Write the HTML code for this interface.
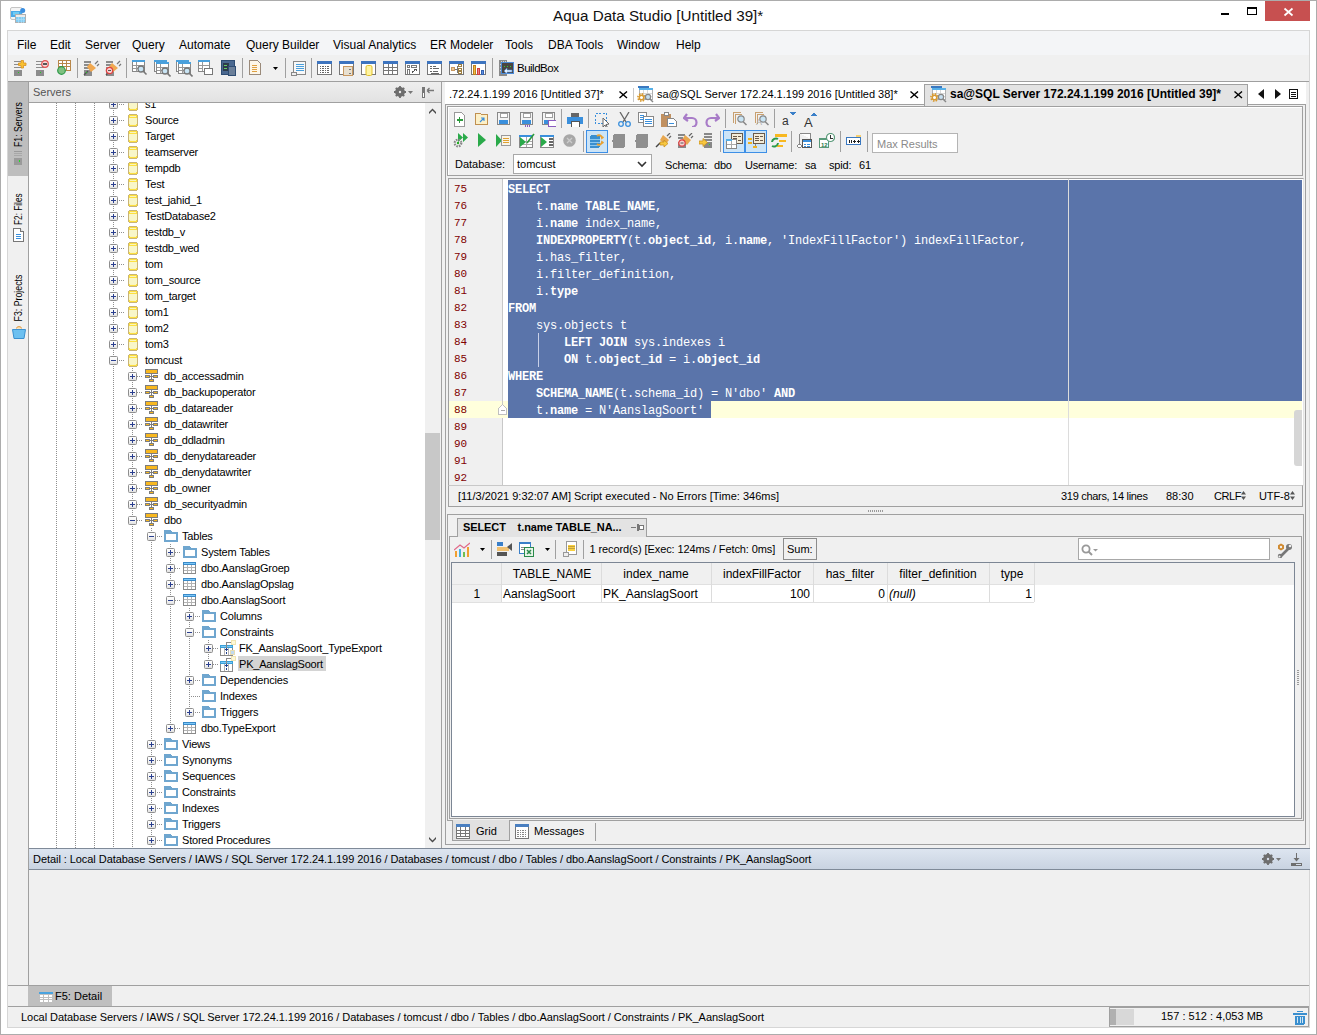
<!DOCTYPE html>
<html><head><meta charset="utf-8">
<style>
*{box-sizing:border-box;margin:0;padding:0}
html,body{width:1317px;height:1035px;overflow:hidden;background:#fff}
body{position:relative;font-family:"Liberation Sans",sans-serif;font-size:11px;color:#000}
.a{position:absolute}
.t{position:absolute;white-space:nowrap;line-height:1}
svg{shape-rendering:crispEdges}
svg .s{shape-rendering:auto}
</style></head><body>
<div class="a" style="left:0px;top:0px;width:1317px;height:1035px;border:1px solid #acacac"></div>
<svg class="a" style="left:10px;top:7px;" width="17" height="17" viewBox="0 0 17 17"><rect class="s" x=".5" y=".5" width="11.5" height="12" rx="1.5" fill="#f4f4f4" stroke="#c4c4c4"/><rect x="1" y="4" width="11" height="6" fill="#4aaae8"/><rect x="3" y="5" width="6" height="3" fill="#70ccf4"/><circle class="s" cx="12.7" cy="3.6" r="2.5" fill="#3a8ee0"/><rect x="5.5" y="7.5" width="10" height="8" fill="#84ccf2" stroke="#b0b0b0"/><rect x="6" y="8" width="9" height="1.5" fill="#ececec"/><path d="M6 12h9M8.5 9.5v6M11 9.5v6M13.5 9.5v6" stroke="#a8dcf8" stroke-width=".8"/></svg>
<div class="t" style="left:553px;top:7.63px;font-size:15.2px;color:#111">Aqua Data Studio [Untitled 39]*</div>
<div class="a" style="left:1221px;top:13px;width:8px;height:2px;background:#000"></div>
<div class="a" style="left:1247px;top:7px;width:10px;height:8px;border:1px solid #000;border-top-width:2px"></div>
<div class="a" style="left:1265px;top:1px;width:45px;height:20px;background:#c75050"></div>
<svg class="a" style="left:1283px;top:7px;" width="11" height="10" viewBox="0 0 11 10"><path class="s" d="M1.5 1.5L9.5 8.5M9.5 1.5L1.5 8.5" stroke="#fff" stroke-width="1.7"/></svg>
<div class="a" style="left:7px;top:30px;width:1303px;height:998px;border:1px solid #d6d6d6;background:#f0f0f0"></div>
<div class="a" style="left:8px;top:31px;width:1301px;height:24px;background:#f4f5f7"></div>
<div class="a" style="left:8px;top:55px;width:1301px;height:26px;background:#f0f0f0"></div>
<div class="a" style="left:8px;top:81px;width:1301px;height:1px;background:#9f9f9f"></div>
<div class="t" style="left:17px;top:39.14px;font-size:12px;">File</div>
<div class="t" style="left:50px;top:39.14px;font-size:12px;">Edit</div>
<div class="t" style="left:85px;top:39.14px;font-size:12px;">Server</div>
<div class="t" style="left:132px;top:39.14px;font-size:12px;">Query</div>
<div class="t" style="left:179px;top:39.14px;font-size:12px;">Automate</div>
<div class="t" style="left:246px;top:39.14px;font-size:12px;">Query Builder</div>
<div class="t" style="left:333px;top:39.14px;font-size:12px;">Visual Analytics</div>
<div class="t" style="left:430px;top:39.14px;font-size:12px;">ER Modeler</div>
<div class="t" style="left:505px;top:39.14px;font-size:12px;">Tools</div>
<div class="t" style="left:548px;top:39.14px;font-size:12px;">DBA Tools</div>
<div class="t" style="left:617px;top:39.14px;font-size:12px;">Window</div>
<div class="t" style="left:676px;top:39.14px;font-size:12px;">Help</div>
<svg class="a" style="left:13px;top:60px;" width="15" height="16" viewBox="0 0 15 16"><path d="M1 1.5h8M1 4.5h8M1 7.5h8" stroke="#8c8c8c" stroke-width="1.6"/>
<rect x="1" y="10" width="8" height="6" fill="#8c8c8c"/><rect x="5" y="12" width="1" height="1" fill="#2c2"/><path class="s" d="M8 0.5h2.5v2.5H13v2.5h-2.5V8H8V5.5H5.5V3H8z" fill="#f8c030" stroke="#d89020" stroke-width=".8"/></svg>
<svg class="a" style="left:35px;top:60px;" width="15" height="16" viewBox="0 0 15 16"><path d="M1 1.5h8M1 4.5h8M1 7.5h8" stroke="#8c8c8c" stroke-width="1.6"/>
<rect x="1" y="10" width="8" height="6" fill="#8c8c8c"/><rect x="5" y="12" width="1" height="1" fill="#2c2"/><circle class="s" cx="10" cy="4" r="3.3" fill="#f8d8d8" stroke="#e05050" stroke-width="1.2"/><path d="M8 4h4" stroke="#555" stroke-width="1.2"/></svg>
<svg class="a" style="left:57px;top:60px;" width="15" height="16" viewBox="0 0 15 16"><rect x="1.5" y=".5" width="12" height="10" fill="#fff" stroke="#b8874a"/>
<path d="M2 3.5h11M2 6.5h11M5.5 1v9M9.5 1v9" stroke="#b8874a"/>
<circle class="s" cx="4.5" cy="10.5" r="3.8" fill="#80c080" stroke="#2e9a4a" stroke-width="1.2"/></svg>
<div class="a" style="left:77px;top:58px;width:1px;height:20px;background:#a0a0a0"></div>
<svg class="a" style="left:83px;top:60px;" width="17" height="17" viewBox="0 0 17 17"><path d="M1 2h7M1 5h6M1 8h5" stroke="#8c8c8c" stroke-width="1.6"/><rect x="1" y="10" width="8" height="6" fill="#8c8c8c"/><g class="s"><path d="M7 3l6 5-5 4-4-5z" fill="#f0a850"/><path d="M12 4l3-3M14 6l2-2" stroke="#777" stroke-width="1.2"/><path d="M5 11l-4 4" stroke="#555" stroke-width="1.5"/></g><rect x="3" y="12" width="1" height="1" fill="#2c2"/></svg>
<svg class="a" style="left:105px;top:60px;" width="17" height="17" viewBox="0 0 17 17"><path d="M1 2h7M1 5h6M1 8h5" stroke="#8c8c8c" stroke-width="1.6"/><rect x="1" y="10" width="8" height="6" fill="#8c8c8c"/><g class="s"><path d="M7 3l6 5-5 4-4-5z" fill="#f0a850"/><path d="M12 4l3-3M14 6l2-2" stroke="#777" stroke-width="1.2"/><path d="M5 11l-4 4" stroke="#555" stroke-width="1.5"/></g><circle class="s" cx="4.5" cy="10.5" r="3.2" fill="#f6d0d0" stroke="#e04040" stroke-width="1.2"/><path d="M3 10.5h3" stroke="#555"/></svg>
<div class="a" style="left:126px;top:58px;width:1px;height:20px;background:#a0a0a0"></div>
<svg class="a" style="left:132px;top:60px;" width="17" height="17" viewBox="0 0 17 17"><rect x="0.5" y="0.5" width="12" height="11" fill="#fff" stroke="#888"/><rect x="0" y="0" width="13" height="2" fill="#4aa0dc"/><path d="M1 5.5h11M1 8.5h11M4.5 2v9" stroke="#999"/><g class="s"><circle cx="9" cy="9" r="3" fill="#c8e4f4" stroke="#777" stroke-width="1.3"/><path d="M11 11l3.5 3.5" stroke="#777" stroke-width="1.6"/></g></svg>
<svg class="a" style="left:154px;top:60px;" width="17" height="17" viewBox="0 0 17 17"><rect x=".5" y=".5" width="12" height="11" fill="#fff" stroke="#888"/><rect x="0" y="0" width="13" height="2" fill="#4aa0dc"/><rect x="2.5" y="2.5" width="12" height="11" fill="#fff" stroke="#888"/><rect x="2" y="2" width="13" height="2" fill="#4aa0dc"/><path d="M3 7.5h11M3 10.5h11M6.5 4v9" stroke="#999"/><g class="s"><circle cx="11" cy="11" r="3" fill="#c8e4f4" stroke="#777" stroke-width="1.3"/><path d="M13 13l3.5 3.5" stroke="#777" stroke-width="1.6"/></g></svg>
<svg class="a" style="left:176px;top:60px;" width="17" height="17" viewBox="0 0 17 17"><rect x=".5" y=".5" width="12" height="11" fill="#fff" stroke="#888"/><rect x="0" y="0" width="13" height="2" fill="#4aa0dc"/><rect x="2.5" y="2.5" width="12" height="11" fill="#fff" stroke="#888"/><rect x="2" y="2" width="13" height="2" fill="#4aa0dc"/><path d="M3 7.5h11M3 10.5h11M6.5 4v9" stroke="#999"/><g class="s"><circle cx="11" cy="11" r="3" fill="#c8e4f4" stroke="#777" stroke-width="1.3"/><path d="M13 13l3.5 3.5" stroke="#777" stroke-width="1.6"/></g></svg>
<svg class="a" style="left:198px;top:60px;" width="16" height="16" viewBox="0 0 16 16"><rect x=".5" y=".5" width="11" height="11" fill="#fff" stroke="#888"/><rect x="0" y="0" width="12" height="2" fill="#4aa0dc"/><path d="M1 5.5h10M1 8.5h4M4.5 2v9" stroke="#999"/><rect x="6.5" y="8.5" width="8" height="6" fill="#fff" stroke="#777"/></svg>
<svg class="a" style="left:221px;top:60px;" width="15" height="16" viewBox="0 0 15 16"><rect x=".5" y=".5" width="13" height="14" fill="#4a6890" stroke="#2f4d73"/><rect x="2" y="3" width="6" height="8" fill="#2d3b4c"/><path d="M3 5h3M3 8h3" stroke="#6c6" /><rect x="7" y="6" width="7" height="9" fill="#6b7f99" stroke="#2f4d73"/></svg>
<div class="a" style="left:242px;top:58px;width:1px;height:20px;background:#a0a0a0"></div>
<svg class="a" style="left:249px;top:60px;" width="12" height="16" viewBox="0 0 12 16"><path d="M.5 .5h8l3 3v11h-11z" fill="#fdf6e8" stroke="#9a8a7a"/><path d="M3 5h5M3 7h5M3 9h5M3 11h5" stroke="#e0a040" stroke-width="1"/></svg>
<svg class="a" style="left:273px;top:67px;" width="5" height="3" viewBox="0 0 5 3"><path class="s" d="M0 0H5L2.5 3z" fill="#000"/></svg>
<div class="a" style="left:285px;top:58px;width:1px;height:20px;background:#a0a0a0"></div>
<svg class="a" style="left:290px;top:60px;" width="17" height="17" viewBox="0 0 17 17"><path d="M3.5 1.5h12v13h-12z" fill="#f8f8f8" stroke="#888"/><path d="M1.5 12.5h5v3h-5z" fill="#eee" stroke="#888"/><path d="M6 4h8M6 6h8M6 8h8M6 10h8" stroke="#4a9fdc"/></svg>
<div class="a" style="left:311px;top:58px;width:1px;height:20px;background:#a0a0a0"></div>
<svg class="a" style="left:317px;top:61px;" width="16" height="15" viewBox="0 0 16 15"><rect x=".5" y=".5" width="14" height="13" fill="#fff" stroke="#777"/><rect x="0" y="0" width="15" height="2.5" fill="#3d74bf"/><path d="M2.5 5.5h10M2.5 7.5h10M2.5 9.5h10M2.5 11.5h10" stroke="#666" stroke-dasharray="1.5 1"/></svg>
<svg class="a" style="left:339px;top:61px;" width="16" height="15" viewBox="0 0 16 15"><rect x=".5" y=".5" width="14" height="13" fill="#fff" stroke="#777"/><rect x="0" y="0" width="15" height="2.5" fill="#3d74bf"/><rect x="4.5" y="5.5" width="9" height="9" fill="#e8e0d0" stroke="#c89860"/><path d="M10 8h2M10 12h2" stroke="#777"/></svg>
<svg class="a" style="left:361px;top:61px;" width="16" height="15" viewBox="0 0 16 15"><rect x=".5" y=".5" width="14" height="13" fill="#fff" stroke="#777"/><rect x="0" y="0" width="15" height="2.5" fill="#3d74bf"/><rect class="s" x="5" y="4.5" width="6" height="10" rx="1.5" fill="#fff4a0" stroke="#e0c030"/></svg>
<svg class="a" style="left:383px;top:61px;" width="16" height="15" viewBox="0 0 16 15"><rect x=".5" y=".5" width="14" height="13" fill="#fff" stroke="#777"/><rect x="0" y="0" width="15" height="2.5" fill="#3d74bf"/><path d="M1 6.5h13M1 9.5h13M5.5 3v10M9.5 3v10" stroke="#777"/></svg>
<svg class="a" style="left:405px;top:61px;" width="16" height="15" viewBox="0 0 16 15"><rect x=".5" y=".5" width="14" height="13" fill="#fff" stroke="#777"/><rect x="0" y="0" width="15" height="2.5" fill="#3d74bf"/><rect x="2.5" y="4.5" width="2" height="2" fill="none" stroke="#777"/><rect x="6.5" y="4.5" width="5" height="2" fill="none" stroke="#777"/><rect x="2.5" y="8.5" width="2" height="5" fill="none" stroke="#777"/><path d="M7 12l4-4M9 8h2v2M7 12v-2" stroke="#555"/></svg>
<svg class="a" style="left:427px;top:61px;" width="16" height="15" viewBox="0 0 16 15"><rect x=".5" y=".5" width="14" height="13" fill="#fff" stroke="#777"/><rect x="0" y="0" width="15" height="2.5" fill="#3d74bf"/><path d="M2.5 5h2M6 5h3M2.5 7.5h2M6 7.5h6M2.5 10h2M6 10h5M4 12h8" stroke="#666"/></svg>
<svg class="a" style="left:449px;top:61px;" width="16" height="15" viewBox="0 0 16 15"><rect x=".5" y=".5" width="14" height="13" fill="#fff" stroke="#777"/><rect x="0" y="0" width="15" height="2.5" fill="#3d74bf"/><rect x="2.5" y="6.5" width="3" height="3" fill="#f0c890" stroke="#c89860"/><rect x="9.5" y="3.5" width="3" height="2" fill="#fff" stroke="#a08040"/><rect x="9.5" y="7" width="3" height="2" fill="#fff" stroke="#a08040"/><rect x="9.5" y="10.5" width="3" height="2" fill="#fff" stroke="#a08040"/><path d="M6 8h2M8 4.5v7" stroke="#777"/></svg>
<svg class="a" style="left:471px;top:61px;" width="16" height="15" viewBox="0 0 16 15"><rect x=".5" y=".5" width="14" height="13" fill="#fff" stroke="#777"/><rect x="0" y="0" width="15" height="2.5" fill="#3d74bf"/><rect x="2.5" y="4.5" width="2" height="9" fill="#f0c040" stroke="#c08020"/><rect x="6.5" y="7.5" width="2" height="6" fill="#f08080" stroke="#d04040"/><rect x="10.5" y="9.5" width="2" height="4" fill="#6090e0" stroke="#3060b0"/></svg>
<div class="a" style="left:492px;top:58px;width:1px;height:20px;background:#a0a0a0"></div>
<svg class="a" style="left:499px;top:60px;" width="15" height="16" viewBox="0 0 15 16"><rect x="0" y="0" width="8" height="16" fill="#8a8a8a"/><path d="M2 1.5h1M4 1.5h1M6 1.5h1M1 4h1M1 7h1M1 10h1" stroke="#d0d0d0"/><rect x="2.5" y="2.5" width="12" height="11" fill="#4a4440" stroke="#4a8ad8"/><path d="M5 6h1M8 6h1M11 6h1" stroke="#3c3"/><path class="s" d="M5 11l3-3v2h5v2H8v2z" fill="#e8f4ff" stroke="#4a8ad8" stroke-width=".6"/></svg>
<div class="t" style="left:517px;top:62.57px;font-size:11.5px;letter-spacing:-0.5px">BuildBox</div>
<svg width="0" height="0" style="position:absolute"><defs><linearGradient id="eg" x1="0" y1="0" x2="0" y2="1"><stop offset="0" stop-color="#ffffff"/><stop offset=".55" stop-color="#f4f4f4"/><stop offset="1" stop-color="#dcdcdc"/></linearGradient></defs></svg>
<div class="a" style="left:8px;top:82px;width:20px;height:904px;background:#f0f0f0"></div>
<div class="a" style="left:28px;top:82px;width:1px;height:904px;background:#a0a0a0"></div>
<div class="a" style="left:8px;top:82px;width:20px;height:94px;background:#bebebe"></div>
<div class="t" style="left:0;top:0;font-size:11px;transform-origin:0 0;transform:translate(12.8px,147px) rotate(-90deg) scaleX(0.79)">F1: Servers</div>
<svg class="a" style="left:14px;top:151px;" width="8" height="14" viewBox="0 0 8 14"><rect x="0" y="0" width="8" height="1" fill="#9a9a9a"/><rect x="0" y="2" width="8" height="1" fill="#a8a8a8"/><rect x="0" y="4" width="8" height="1" fill="#a8a8a8"/><rect x="0" y="7" width="8" height="7" fill="#9a9a9a"/><rect x="5" y="9" width="1" height="2" fill="#2d2"/></svg>
<div class="t" style="left:0;top:0;font-size:11px;transform-origin:0 0;transform:translate(12.8px,225px) rotate(-90deg) scaleX(0.75)">F2: Files</div>
<svg class="a" style="left:13px;top:228px;" width="11" height="14" viewBox="0 0 11 14"><path d="M.5 .5h7l3 3v10h-10z" fill="#fff" stroke="#777"/><path d="M7.5 .5v3h3" fill="#ddd" stroke="#777"/><path d="M3 6.5h5M3 8.5h5M3 10.5h5" stroke="#3a8fdc"/></svg>
<div class="t" style="left:0;top:0;font-size:11px;transform-origin:0 0;transform:translate(12.8px,321.5px) rotate(-90deg) scaleX(0.8)">F3: Projects</div>
<svg class="a" style="left:12px;top:326px;" width="14" height="13" viewBox="0 0 14 13"><path class="s" d="M4.5 2.5a2.5 2 0 0 1 5 0" fill="#f8d8a0" stroke="#e0a050"/><path class="s" d="M.5 3.5h13l-1.5 9h-10z" fill="#6cc0f0" stroke="#3a90d0"/></svg>
<div class="a" style="left:29px;top:82px;width:412px;height:20px;background:linear-gradient(#eeeeee,#e2e2e2)"></div>
<div class="a" style="left:29px;top:102px;width:412px;height:1px;background:#a0a0a0"></div>
<div class="a" style="left:441px;top:82px;width:1px;height:766px;background:#a0a0a0"></div>
<div class="t" style="left:33px;top:87.39px;font-size:11px;color:#555">Servers</div>
<svg class="a" style="left:394px;top:86px;" width="20" height="12" viewBox="0 0 20 12"><g class="s"><circle cx="6" cy="6" r="3.6" fill="none" stroke="#6e6e6e" stroke-width="2.6"/><path d="M6 0v12M0 6h12M1.8 1.8l8.4 8.4M10.2 1.8l-8.4 8.4" stroke="#6e6e6e" stroke-width="1.8"/><circle cx="6" cy="6" r="1.2" fill="#eaeaea"/></g><path class="s" d="M14 5h5l-2.5 3z" fill="#777"/></svg>
<svg class="a" style="left:421px;top:86px;" width="14" height="13" viewBox="0 0 14 13"><rect x="1.5" y="1.5" width="2" height="10" fill="#fff" stroke="#777"/><rect x="1" y="1" width="3" height="6" fill="#777"/><path class="s" d="M6 4.5h7M6 4.5l2.5-2.5M6 4.5l2.5 2.5" stroke="#777" stroke-width="1.3" fill="none"/></svg>
<div class="a" style="left:29px;top:103px;width:396px;height:745px;background:#fff"></div>
<div class="a" style="left:425px;top:103px;width:16px;height:745px;background:#f0f0f0"></div>
<div class="a" style="left:425px;top:433px;width:15px;height:107px;background:#c8c8c8"></div>
<svg class="a" style="left:429px;top:108px;" width="7" height="6" viewBox="0 0 7 6"><path class="s" d="M0 6V4L3.5 .5 7 4v2L3.5 2.5z" fill="#4a4a4a"/></svg>
<svg class="a" style="left:429px;top:837px;" width="7" height="6" viewBox="0 0 7 6"><path class="s" d="M0 0v2l3.5 3.5L7 2V0L3.5 3.5z" fill="#4a4a4a"/></svg>
<div class="a" style="left:0;top:103px;width:425px;height:745px;overflow:hidden"><div class="a" style="left:0;top:-103px;width:425px;height:1035px">
<div class="a" style="left:56px;top:103px;width:1px;height:745px;background:repeating-linear-gradient(#8f8f8f 0 1px,transparent 1px 2px)"></div>
<div class="a" style="left:75px;top:103px;width:1px;height:745px;background:repeating-linear-gradient(#8f8f8f 0 1px,transparent 1px 2px)"></div>
<div class="a" style="left:94px;top:103px;width:1px;height:745px;background:repeating-linear-gradient(#8f8f8f 0 1px,transparent 1px 2px)"></div>
<div class="a" style="left:113px;top:96px;width:1px;height:9px;background:repeating-linear-gradient(#8f8f8f 0 1px,transparent 1px 2px)"></div>
<div class="a" style="left:113px;top:104px;width:1px;height:8px;background:repeating-linear-gradient(#8f8f8f 0 1px,transparent 1px 2px)"></div>
<div class="a" style="left:119px;top:104px;width:5px;height:1px;background:repeating-linear-gradient(90deg,#8f8f8f 0 1px,transparent 1px 2px)"></div>
<svg class="a" style="left:109px;top:100px;" width="9" height="9" viewBox="0 0 9 9"><rect class="s" x=".5" y=".5" width="8" height="8" rx="1" fill="url(#eg)" stroke="#8e8e8e"/><path d="M2 4.5h5" stroke="#2a3f8f"/><path d="M4.5 2v5" stroke="#2a3f8f"/></svg>
<svg class="a" style="left:128px;top:98px;" width="10" height="13" viewBox="0 0 10 13"><rect x="1" y="0" width="8" height="13" fill="#c8b478"/><rect x="0" y="1" width="10" height="11" fill="#c8b478"/><rect x="1" y="1" width="8" height="3" fill="#fde040"/><rect x="2" y="2" width="6" height="1" fill="#f8f4c0"/><rect x="1" y="4" width="8" height="6" fill="#f8f6c8"/><rect x="1" y="10" width="8" height="2" fill="#fde040"/><rect x="2" y="10" width="6" height="1" fill="#f8f4c0"/></svg>
<div class="t" style="left:145px;top:99.19px;font-size:11px;letter-spacing:-0.2px">s1</div>
<div class="a" style="left:113px;top:112px;width:1px;height:9px;background:repeating-linear-gradient(#8f8f8f 0 1px,transparent 1px 2px)"></div>
<div class="a" style="left:113px;top:120px;width:1px;height:8px;background:repeating-linear-gradient(#8f8f8f 0 1px,transparent 1px 2px)"></div>
<div class="a" style="left:119px;top:120px;width:5px;height:1px;background:repeating-linear-gradient(90deg,#8f8f8f 0 1px,transparent 1px 2px)"></div>
<svg class="a" style="left:109px;top:116px;" width="9" height="9" viewBox="0 0 9 9"><rect class="s" x=".5" y=".5" width="8" height="8" rx="1" fill="url(#eg)" stroke="#8e8e8e"/><path d="M2 4.5h5" stroke="#2a3f8f"/><path d="M4.5 2v5" stroke="#2a3f8f"/></svg>
<svg class="a" style="left:128px;top:114px;" width="10" height="13" viewBox="0 0 10 13"><rect x="1" y="0" width="8" height="13" fill="#c8b478"/><rect x="0" y="1" width="10" height="11" fill="#c8b478"/><rect x="1" y="1" width="8" height="3" fill="#fde040"/><rect x="2" y="2" width="6" height="1" fill="#f8f4c0"/><rect x="1" y="4" width="8" height="6" fill="#f8f6c8"/><rect x="1" y="10" width="8" height="2" fill="#fde040"/><rect x="2" y="10" width="6" height="1" fill="#f8f4c0"/></svg>
<div class="t" style="left:145px;top:115.19px;font-size:11px;letter-spacing:-0.2px">Source</div>
<div class="a" style="left:113px;top:128px;width:1px;height:9px;background:repeating-linear-gradient(#8f8f8f 0 1px,transparent 1px 2px)"></div>
<div class="a" style="left:113px;top:136px;width:1px;height:8px;background:repeating-linear-gradient(#8f8f8f 0 1px,transparent 1px 2px)"></div>
<div class="a" style="left:119px;top:136px;width:5px;height:1px;background:repeating-linear-gradient(90deg,#8f8f8f 0 1px,transparent 1px 2px)"></div>
<svg class="a" style="left:109px;top:132px;" width="9" height="9" viewBox="0 0 9 9"><rect class="s" x=".5" y=".5" width="8" height="8" rx="1" fill="url(#eg)" stroke="#8e8e8e"/><path d="M2 4.5h5" stroke="#2a3f8f"/><path d="M4.5 2v5" stroke="#2a3f8f"/></svg>
<svg class="a" style="left:128px;top:130px;" width="10" height="13" viewBox="0 0 10 13"><rect x="1" y="0" width="8" height="13" fill="#c8b478"/><rect x="0" y="1" width="10" height="11" fill="#c8b478"/><rect x="1" y="1" width="8" height="3" fill="#fde040"/><rect x="2" y="2" width="6" height="1" fill="#f8f4c0"/><rect x="1" y="4" width="8" height="6" fill="#f8f6c8"/><rect x="1" y="10" width="8" height="2" fill="#fde040"/><rect x="2" y="10" width="6" height="1" fill="#f8f4c0"/></svg>
<div class="t" style="left:145px;top:131.19px;font-size:11px;letter-spacing:-0.2px">Target</div>
<div class="a" style="left:113px;top:144px;width:1px;height:9px;background:repeating-linear-gradient(#8f8f8f 0 1px,transparent 1px 2px)"></div>
<div class="a" style="left:113px;top:152px;width:1px;height:8px;background:repeating-linear-gradient(#8f8f8f 0 1px,transparent 1px 2px)"></div>
<div class="a" style="left:119px;top:152px;width:5px;height:1px;background:repeating-linear-gradient(90deg,#8f8f8f 0 1px,transparent 1px 2px)"></div>
<svg class="a" style="left:109px;top:148px;" width="9" height="9" viewBox="0 0 9 9"><rect class="s" x=".5" y=".5" width="8" height="8" rx="1" fill="url(#eg)" stroke="#8e8e8e"/><path d="M2 4.5h5" stroke="#2a3f8f"/><path d="M4.5 2v5" stroke="#2a3f8f"/></svg>
<svg class="a" style="left:128px;top:146px;" width="10" height="13" viewBox="0 0 10 13"><rect x="1" y="0" width="8" height="13" fill="#c8b478"/><rect x="0" y="1" width="10" height="11" fill="#c8b478"/><rect x="1" y="1" width="8" height="3" fill="#fde040"/><rect x="2" y="2" width="6" height="1" fill="#f8f4c0"/><rect x="1" y="4" width="8" height="6" fill="#f8f6c8"/><rect x="1" y="10" width="8" height="2" fill="#fde040"/><rect x="2" y="10" width="6" height="1" fill="#f8f4c0"/></svg>
<div class="t" style="left:145px;top:147.19px;font-size:11px;letter-spacing:-0.2px">teamserver</div>
<div class="a" style="left:113px;top:160px;width:1px;height:9px;background:repeating-linear-gradient(#8f8f8f 0 1px,transparent 1px 2px)"></div>
<div class="a" style="left:113px;top:168px;width:1px;height:8px;background:repeating-linear-gradient(#8f8f8f 0 1px,transparent 1px 2px)"></div>
<div class="a" style="left:119px;top:168px;width:5px;height:1px;background:repeating-linear-gradient(90deg,#8f8f8f 0 1px,transparent 1px 2px)"></div>
<svg class="a" style="left:109px;top:164px;" width="9" height="9" viewBox="0 0 9 9"><rect class="s" x=".5" y=".5" width="8" height="8" rx="1" fill="url(#eg)" stroke="#8e8e8e"/><path d="M2 4.5h5" stroke="#2a3f8f"/><path d="M4.5 2v5" stroke="#2a3f8f"/></svg>
<svg class="a" style="left:128px;top:162px;" width="10" height="13" viewBox="0 0 10 13"><rect x="1" y="0" width="8" height="13" fill="#c8b478"/><rect x="0" y="1" width="10" height="11" fill="#c8b478"/><rect x="1" y="1" width="8" height="3" fill="#fde040"/><rect x="2" y="2" width="6" height="1" fill="#f8f4c0"/><rect x="1" y="4" width="8" height="6" fill="#f8f6c8"/><rect x="1" y="10" width="8" height="2" fill="#fde040"/><rect x="2" y="10" width="6" height="1" fill="#f8f4c0"/></svg>
<div class="t" style="left:145px;top:163.19px;font-size:11px;letter-spacing:-0.2px">tempdb</div>
<div class="a" style="left:113px;top:176px;width:1px;height:9px;background:repeating-linear-gradient(#8f8f8f 0 1px,transparent 1px 2px)"></div>
<div class="a" style="left:113px;top:184px;width:1px;height:8px;background:repeating-linear-gradient(#8f8f8f 0 1px,transparent 1px 2px)"></div>
<div class="a" style="left:119px;top:184px;width:5px;height:1px;background:repeating-linear-gradient(90deg,#8f8f8f 0 1px,transparent 1px 2px)"></div>
<svg class="a" style="left:109px;top:180px;" width="9" height="9" viewBox="0 0 9 9"><rect class="s" x=".5" y=".5" width="8" height="8" rx="1" fill="url(#eg)" stroke="#8e8e8e"/><path d="M2 4.5h5" stroke="#2a3f8f"/><path d="M4.5 2v5" stroke="#2a3f8f"/></svg>
<svg class="a" style="left:128px;top:178px;" width="10" height="13" viewBox="0 0 10 13"><rect x="1" y="0" width="8" height="13" fill="#c8b478"/><rect x="0" y="1" width="10" height="11" fill="#c8b478"/><rect x="1" y="1" width="8" height="3" fill="#fde040"/><rect x="2" y="2" width="6" height="1" fill="#f8f4c0"/><rect x="1" y="4" width="8" height="6" fill="#f8f6c8"/><rect x="1" y="10" width="8" height="2" fill="#fde040"/><rect x="2" y="10" width="6" height="1" fill="#f8f4c0"/></svg>
<div class="t" style="left:145px;top:179.19px;font-size:11px;letter-spacing:-0.2px">Test</div>
<div class="a" style="left:113px;top:192px;width:1px;height:9px;background:repeating-linear-gradient(#8f8f8f 0 1px,transparent 1px 2px)"></div>
<div class="a" style="left:113px;top:200px;width:1px;height:8px;background:repeating-linear-gradient(#8f8f8f 0 1px,transparent 1px 2px)"></div>
<div class="a" style="left:119px;top:200px;width:5px;height:1px;background:repeating-linear-gradient(90deg,#8f8f8f 0 1px,transparent 1px 2px)"></div>
<svg class="a" style="left:109px;top:196px;" width="9" height="9" viewBox="0 0 9 9"><rect class="s" x=".5" y=".5" width="8" height="8" rx="1" fill="url(#eg)" stroke="#8e8e8e"/><path d="M2 4.5h5" stroke="#2a3f8f"/><path d="M4.5 2v5" stroke="#2a3f8f"/></svg>
<svg class="a" style="left:128px;top:194px;" width="10" height="13" viewBox="0 0 10 13"><rect x="1" y="0" width="8" height="13" fill="#c8b478"/><rect x="0" y="1" width="10" height="11" fill="#c8b478"/><rect x="1" y="1" width="8" height="3" fill="#fde040"/><rect x="2" y="2" width="6" height="1" fill="#f8f4c0"/><rect x="1" y="4" width="8" height="6" fill="#f8f6c8"/><rect x="1" y="10" width="8" height="2" fill="#fde040"/><rect x="2" y="10" width="6" height="1" fill="#f8f4c0"/></svg>
<div class="t" style="left:145px;top:195.19px;font-size:11px;letter-spacing:-0.2px">test_jahid_1</div>
<div class="a" style="left:113px;top:208px;width:1px;height:9px;background:repeating-linear-gradient(#8f8f8f 0 1px,transparent 1px 2px)"></div>
<div class="a" style="left:113px;top:216px;width:1px;height:8px;background:repeating-linear-gradient(#8f8f8f 0 1px,transparent 1px 2px)"></div>
<div class="a" style="left:119px;top:216px;width:5px;height:1px;background:repeating-linear-gradient(90deg,#8f8f8f 0 1px,transparent 1px 2px)"></div>
<svg class="a" style="left:109px;top:212px;" width="9" height="9" viewBox="0 0 9 9"><rect class="s" x=".5" y=".5" width="8" height="8" rx="1" fill="url(#eg)" stroke="#8e8e8e"/><path d="M2 4.5h5" stroke="#2a3f8f"/><path d="M4.5 2v5" stroke="#2a3f8f"/></svg>
<svg class="a" style="left:128px;top:210px;" width="10" height="13" viewBox="0 0 10 13"><rect x="1" y="0" width="8" height="13" fill="#c8b478"/><rect x="0" y="1" width="10" height="11" fill="#c8b478"/><rect x="1" y="1" width="8" height="3" fill="#fde040"/><rect x="2" y="2" width="6" height="1" fill="#f8f4c0"/><rect x="1" y="4" width="8" height="6" fill="#f8f6c8"/><rect x="1" y="10" width="8" height="2" fill="#fde040"/><rect x="2" y="10" width="6" height="1" fill="#f8f4c0"/></svg>
<div class="t" style="left:145px;top:211.19px;font-size:11px;letter-spacing:-0.2px">TestDatabase2</div>
<div class="a" style="left:113px;top:224px;width:1px;height:9px;background:repeating-linear-gradient(#8f8f8f 0 1px,transparent 1px 2px)"></div>
<div class="a" style="left:113px;top:232px;width:1px;height:8px;background:repeating-linear-gradient(#8f8f8f 0 1px,transparent 1px 2px)"></div>
<div class="a" style="left:119px;top:232px;width:5px;height:1px;background:repeating-linear-gradient(90deg,#8f8f8f 0 1px,transparent 1px 2px)"></div>
<svg class="a" style="left:109px;top:228px;" width="9" height="9" viewBox="0 0 9 9"><rect class="s" x=".5" y=".5" width="8" height="8" rx="1" fill="url(#eg)" stroke="#8e8e8e"/><path d="M2 4.5h5" stroke="#2a3f8f"/><path d="M4.5 2v5" stroke="#2a3f8f"/></svg>
<svg class="a" style="left:128px;top:226px;" width="10" height="13" viewBox="0 0 10 13"><rect x="1" y="0" width="8" height="13" fill="#c8b478"/><rect x="0" y="1" width="10" height="11" fill="#c8b478"/><rect x="1" y="1" width="8" height="3" fill="#fde040"/><rect x="2" y="2" width="6" height="1" fill="#f8f4c0"/><rect x="1" y="4" width="8" height="6" fill="#f8f6c8"/><rect x="1" y="10" width="8" height="2" fill="#fde040"/><rect x="2" y="10" width="6" height="1" fill="#f8f4c0"/></svg>
<div class="t" style="left:145px;top:227.19px;font-size:11px;letter-spacing:-0.2px">testdb_v</div>
<div class="a" style="left:113px;top:240px;width:1px;height:9px;background:repeating-linear-gradient(#8f8f8f 0 1px,transparent 1px 2px)"></div>
<div class="a" style="left:113px;top:248px;width:1px;height:8px;background:repeating-linear-gradient(#8f8f8f 0 1px,transparent 1px 2px)"></div>
<div class="a" style="left:119px;top:248px;width:5px;height:1px;background:repeating-linear-gradient(90deg,#8f8f8f 0 1px,transparent 1px 2px)"></div>
<svg class="a" style="left:109px;top:244px;" width="9" height="9" viewBox="0 0 9 9"><rect class="s" x=".5" y=".5" width="8" height="8" rx="1" fill="url(#eg)" stroke="#8e8e8e"/><path d="M2 4.5h5" stroke="#2a3f8f"/><path d="M4.5 2v5" stroke="#2a3f8f"/></svg>
<svg class="a" style="left:128px;top:242px;" width="10" height="13" viewBox="0 0 10 13"><rect x="1" y="0" width="8" height="13" fill="#c8b478"/><rect x="0" y="1" width="10" height="11" fill="#c8b478"/><rect x="1" y="1" width="8" height="3" fill="#fde040"/><rect x="2" y="2" width="6" height="1" fill="#f8f4c0"/><rect x="1" y="4" width="8" height="6" fill="#f8f6c8"/><rect x="1" y="10" width="8" height="2" fill="#fde040"/><rect x="2" y="10" width="6" height="1" fill="#f8f4c0"/></svg>
<div class="t" style="left:145px;top:243.19px;font-size:11px;letter-spacing:-0.2px">testdb_wed</div>
<div class="a" style="left:113px;top:256px;width:1px;height:9px;background:repeating-linear-gradient(#8f8f8f 0 1px,transparent 1px 2px)"></div>
<div class="a" style="left:113px;top:264px;width:1px;height:8px;background:repeating-linear-gradient(#8f8f8f 0 1px,transparent 1px 2px)"></div>
<div class="a" style="left:119px;top:264px;width:5px;height:1px;background:repeating-linear-gradient(90deg,#8f8f8f 0 1px,transparent 1px 2px)"></div>
<svg class="a" style="left:109px;top:260px;" width="9" height="9" viewBox="0 0 9 9"><rect class="s" x=".5" y=".5" width="8" height="8" rx="1" fill="url(#eg)" stroke="#8e8e8e"/><path d="M2 4.5h5" stroke="#2a3f8f"/><path d="M4.5 2v5" stroke="#2a3f8f"/></svg>
<svg class="a" style="left:128px;top:258px;" width="10" height="13" viewBox="0 0 10 13"><rect x="1" y="0" width="8" height="13" fill="#c8b478"/><rect x="0" y="1" width="10" height="11" fill="#c8b478"/><rect x="1" y="1" width="8" height="3" fill="#fde040"/><rect x="2" y="2" width="6" height="1" fill="#f8f4c0"/><rect x="1" y="4" width="8" height="6" fill="#f8f6c8"/><rect x="1" y="10" width="8" height="2" fill="#fde040"/><rect x="2" y="10" width="6" height="1" fill="#f8f4c0"/></svg>
<div class="t" style="left:145px;top:259.19px;font-size:11px;letter-spacing:-0.2px">tom</div>
<div class="a" style="left:113px;top:272px;width:1px;height:9px;background:repeating-linear-gradient(#8f8f8f 0 1px,transparent 1px 2px)"></div>
<div class="a" style="left:113px;top:280px;width:1px;height:8px;background:repeating-linear-gradient(#8f8f8f 0 1px,transparent 1px 2px)"></div>
<div class="a" style="left:119px;top:280px;width:5px;height:1px;background:repeating-linear-gradient(90deg,#8f8f8f 0 1px,transparent 1px 2px)"></div>
<svg class="a" style="left:109px;top:276px;" width="9" height="9" viewBox="0 0 9 9"><rect class="s" x=".5" y=".5" width="8" height="8" rx="1" fill="url(#eg)" stroke="#8e8e8e"/><path d="M2 4.5h5" stroke="#2a3f8f"/><path d="M4.5 2v5" stroke="#2a3f8f"/></svg>
<svg class="a" style="left:128px;top:274px;" width="10" height="13" viewBox="0 0 10 13"><rect x="1" y="0" width="8" height="13" fill="#c8b478"/><rect x="0" y="1" width="10" height="11" fill="#c8b478"/><rect x="1" y="1" width="8" height="3" fill="#fde040"/><rect x="2" y="2" width="6" height="1" fill="#f8f4c0"/><rect x="1" y="4" width="8" height="6" fill="#f8f6c8"/><rect x="1" y="10" width="8" height="2" fill="#fde040"/><rect x="2" y="10" width="6" height="1" fill="#f8f4c0"/></svg>
<div class="t" style="left:145px;top:275.19px;font-size:11px;letter-spacing:-0.2px">tom_source</div>
<div class="a" style="left:113px;top:288px;width:1px;height:9px;background:repeating-linear-gradient(#8f8f8f 0 1px,transparent 1px 2px)"></div>
<div class="a" style="left:113px;top:296px;width:1px;height:8px;background:repeating-linear-gradient(#8f8f8f 0 1px,transparent 1px 2px)"></div>
<div class="a" style="left:119px;top:296px;width:5px;height:1px;background:repeating-linear-gradient(90deg,#8f8f8f 0 1px,transparent 1px 2px)"></div>
<svg class="a" style="left:109px;top:292px;" width="9" height="9" viewBox="0 0 9 9"><rect class="s" x=".5" y=".5" width="8" height="8" rx="1" fill="url(#eg)" stroke="#8e8e8e"/><path d="M2 4.5h5" stroke="#2a3f8f"/><path d="M4.5 2v5" stroke="#2a3f8f"/></svg>
<svg class="a" style="left:128px;top:290px;" width="10" height="13" viewBox="0 0 10 13"><rect x="1" y="0" width="8" height="13" fill="#c8b478"/><rect x="0" y="1" width="10" height="11" fill="#c8b478"/><rect x="1" y="1" width="8" height="3" fill="#fde040"/><rect x="2" y="2" width="6" height="1" fill="#f8f4c0"/><rect x="1" y="4" width="8" height="6" fill="#f8f6c8"/><rect x="1" y="10" width="8" height="2" fill="#fde040"/><rect x="2" y="10" width="6" height="1" fill="#f8f4c0"/></svg>
<div class="t" style="left:145px;top:291.19px;font-size:11px;letter-spacing:-0.2px">tom_target</div>
<div class="a" style="left:113px;top:304px;width:1px;height:9px;background:repeating-linear-gradient(#8f8f8f 0 1px,transparent 1px 2px)"></div>
<div class="a" style="left:113px;top:312px;width:1px;height:8px;background:repeating-linear-gradient(#8f8f8f 0 1px,transparent 1px 2px)"></div>
<div class="a" style="left:119px;top:312px;width:5px;height:1px;background:repeating-linear-gradient(90deg,#8f8f8f 0 1px,transparent 1px 2px)"></div>
<svg class="a" style="left:109px;top:308px;" width="9" height="9" viewBox="0 0 9 9"><rect class="s" x=".5" y=".5" width="8" height="8" rx="1" fill="url(#eg)" stroke="#8e8e8e"/><path d="M2 4.5h5" stroke="#2a3f8f"/><path d="M4.5 2v5" stroke="#2a3f8f"/></svg>
<svg class="a" style="left:128px;top:306px;" width="10" height="13" viewBox="0 0 10 13"><rect x="1" y="0" width="8" height="13" fill="#c8b478"/><rect x="0" y="1" width="10" height="11" fill="#c8b478"/><rect x="1" y="1" width="8" height="3" fill="#fde040"/><rect x="2" y="2" width="6" height="1" fill="#f8f4c0"/><rect x="1" y="4" width="8" height="6" fill="#f8f6c8"/><rect x="1" y="10" width="8" height="2" fill="#fde040"/><rect x="2" y="10" width="6" height="1" fill="#f8f4c0"/></svg>
<div class="t" style="left:145px;top:307.19px;font-size:11px;letter-spacing:-0.2px">tom1</div>
<div class="a" style="left:113px;top:320px;width:1px;height:9px;background:repeating-linear-gradient(#8f8f8f 0 1px,transparent 1px 2px)"></div>
<div class="a" style="left:113px;top:328px;width:1px;height:8px;background:repeating-linear-gradient(#8f8f8f 0 1px,transparent 1px 2px)"></div>
<div class="a" style="left:119px;top:328px;width:5px;height:1px;background:repeating-linear-gradient(90deg,#8f8f8f 0 1px,transparent 1px 2px)"></div>
<svg class="a" style="left:109px;top:324px;" width="9" height="9" viewBox="0 0 9 9"><rect class="s" x=".5" y=".5" width="8" height="8" rx="1" fill="url(#eg)" stroke="#8e8e8e"/><path d="M2 4.5h5" stroke="#2a3f8f"/><path d="M4.5 2v5" stroke="#2a3f8f"/></svg>
<svg class="a" style="left:128px;top:322px;" width="10" height="13" viewBox="0 0 10 13"><rect x="1" y="0" width="8" height="13" fill="#c8b478"/><rect x="0" y="1" width="10" height="11" fill="#c8b478"/><rect x="1" y="1" width="8" height="3" fill="#fde040"/><rect x="2" y="2" width="6" height="1" fill="#f8f4c0"/><rect x="1" y="4" width="8" height="6" fill="#f8f6c8"/><rect x="1" y="10" width="8" height="2" fill="#fde040"/><rect x="2" y="10" width="6" height="1" fill="#f8f4c0"/></svg>
<div class="t" style="left:145px;top:323.19px;font-size:11px;letter-spacing:-0.2px">tom2</div>
<div class="a" style="left:113px;top:336px;width:1px;height:9px;background:repeating-linear-gradient(#8f8f8f 0 1px,transparent 1px 2px)"></div>
<div class="a" style="left:113px;top:344px;width:1px;height:8px;background:repeating-linear-gradient(#8f8f8f 0 1px,transparent 1px 2px)"></div>
<div class="a" style="left:119px;top:344px;width:5px;height:1px;background:repeating-linear-gradient(90deg,#8f8f8f 0 1px,transparent 1px 2px)"></div>
<svg class="a" style="left:109px;top:340px;" width="9" height="9" viewBox="0 0 9 9"><rect class="s" x=".5" y=".5" width="8" height="8" rx="1" fill="url(#eg)" stroke="#8e8e8e"/><path d="M2 4.5h5" stroke="#2a3f8f"/><path d="M4.5 2v5" stroke="#2a3f8f"/></svg>
<svg class="a" style="left:128px;top:338px;" width="10" height="13" viewBox="0 0 10 13"><rect x="1" y="0" width="8" height="13" fill="#c8b478"/><rect x="0" y="1" width="10" height="11" fill="#c8b478"/><rect x="1" y="1" width="8" height="3" fill="#fde040"/><rect x="2" y="2" width="6" height="1" fill="#f8f4c0"/><rect x="1" y="4" width="8" height="6" fill="#f8f6c8"/><rect x="1" y="10" width="8" height="2" fill="#fde040"/><rect x="2" y="10" width="6" height="1" fill="#f8f4c0"/></svg>
<div class="t" style="left:145px;top:339.19px;font-size:11px;letter-spacing:-0.2px">tom3</div>
<div class="a" style="left:113px;top:352px;width:1px;height:9px;background:repeating-linear-gradient(#8f8f8f 0 1px,transparent 1px 2px)"></div>
<div class="a" style="left:113px;top:360px;width:1px;height:8px;background:repeating-linear-gradient(#8f8f8f 0 1px,transparent 1px 2px)"></div>
<div class="a" style="left:119px;top:360px;width:5px;height:1px;background:repeating-linear-gradient(90deg,#8f8f8f 0 1px,transparent 1px 2px)"></div>
<svg class="a" style="left:109px;top:356px;" width="9" height="9" viewBox="0 0 9 9"><rect class="s" x=".5" y=".5" width="8" height="8" rx="1" fill="url(#eg)" stroke="#8e8e8e"/><path d="M2 4.5h5" stroke="#2a3f8f"/></svg>
<svg class="a" style="left:128px;top:354px;" width="10" height="13" viewBox="0 0 10 13"><rect x="1" y="0" width="8" height="13" fill="#c8b478"/><rect x="0" y="1" width="10" height="11" fill="#c8b478"/><rect x="1" y="1" width="8" height="3" fill="#fde040"/><rect x="2" y="2" width="6" height="1" fill="#f8f4c0"/><rect x="1" y="4" width="8" height="6" fill="#f8f6c8"/><rect x="1" y="10" width="8" height="2" fill="#fde040"/><rect x="2" y="10" width="6" height="1" fill="#f8f4c0"/></svg>
<div class="t" style="left:145px;top:355.19px;font-size:11px;letter-spacing:-0.2px">tomcust</div>
<div class="a" style="left:113px;top:368px;width:1px;height:16px;background:repeating-linear-gradient(#8f8f8f 0 1px,transparent 1px 2px)"></div>
<div class="a" style="left:132px;top:368px;width:1px;height:9px;background:repeating-linear-gradient(#8f8f8f 0 1px,transparent 1px 2px)"></div>
<div class="a" style="left:132px;top:376px;width:1px;height:8px;background:repeating-linear-gradient(#8f8f8f 0 1px,transparent 1px 2px)"></div>
<div class="a" style="left:137px;top:376px;width:6px;height:1px;background:repeating-linear-gradient(90deg,#8f8f8f 0 1px,transparent 1px 2px)"></div>
<svg class="a" style="left:128px;top:372px;" width="9" height="9" viewBox="0 0 9 9"><rect class="s" x=".5" y=".5" width="8" height="8" rx="1" fill="url(#eg)" stroke="#8e8e8e"/><path d="M2 4.5h5" stroke="#2a3f8f"/><path d="M4.5 2v5" stroke="#2a3f8f"/></svg>
<svg class="a" style="left:145px;top:369px;" width="13" height="13" viewBox="0 0 13 13"><rect x=".5" y=".5" width="12" height="4" fill="#f8b820" stroke="#7d7d7d"/><rect x=".5" y="6.5" width="4" height="2" fill="#f8b820" stroke="#7d7d7d"/><rect x="8.5" y="6.5" width="4" height="2" fill="#f8b820" stroke="#7d7d7d"/><rect x="4.5" y="10.5" width="4" height="2" fill="#f8b820" stroke="#7d7d7d"/><path d="M5 7.5h3M6.5 5v5" stroke="#7d7d7d"/></svg>
<div class="t" style="left:164px;top:371.19px;font-size:11px;letter-spacing:-0.2px">db_accessadmin</div>
<div class="a" style="left:113px;top:384px;width:1px;height:16px;background:repeating-linear-gradient(#8f8f8f 0 1px,transparent 1px 2px)"></div>
<div class="a" style="left:132px;top:384px;width:1px;height:9px;background:repeating-linear-gradient(#8f8f8f 0 1px,transparent 1px 2px)"></div>
<div class="a" style="left:132px;top:392px;width:1px;height:8px;background:repeating-linear-gradient(#8f8f8f 0 1px,transparent 1px 2px)"></div>
<div class="a" style="left:137px;top:392px;width:6px;height:1px;background:repeating-linear-gradient(90deg,#8f8f8f 0 1px,transparent 1px 2px)"></div>
<svg class="a" style="left:128px;top:388px;" width="9" height="9" viewBox="0 0 9 9"><rect class="s" x=".5" y=".5" width="8" height="8" rx="1" fill="url(#eg)" stroke="#8e8e8e"/><path d="M2 4.5h5" stroke="#2a3f8f"/><path d="M4.5 2v5" stroke="#2a3f8f"/></svg>
<svg class="a" style="left:145px;top:385px;" width="13" height="13" viewBox="0 0 13 13"><rect x=".5" y=".5" width="12" height="4" fill="#f8b820" stroke="#7d7d7d"/><rect x=".5" y="6.5" width="4" height="2" fill="#f8b820" stroke="#7d7d7d"/><rect x="8.5" y="6.5" width="4" height="2" fill="#f8b820" stroke="#7d7d7d"/><rect x="4.5" y="10.5" width="4" height="2" fill="#f8b820" stroke="#7d7d7d"/><path d="M5 7.5h3M6.5 5v5" stroke="#7d7d7d"/></svg>
<div class="t" style="left:164px;top:387.19px;font-size:11px;letter-spacing:-0.2px">db_backupoperator</div>
<div class="a" style="left:113px;top:400px;width:1px;height:16px;background:repeating-linear-gradient(#8f8f8f 0 1px,transparent 1px 2px)"></div>
<div class="a" style="left:132px;top:400px;width:1px;height:9px;background:repeating-linear-gradient(#8f8f8f 0 1px,transparent 1px 2px)"></div>
<div class="a" style="left:132px;top:408px;width:1px;height:8px;background:repeating-linear-gradient(#8f8f8f 0 1px,transparent 1px 2px)"></div>
<div class="a" style="left:137px;top:408px;width:6px;height:1px;background:repeating-linear-gradient(90deg,#8f8f8f 0 1px,transparent 1px 2px)"></div>
<svg class="a" style="left:128px;top:404px;" width="9" height="9" viewBox="0 0 9 9"><rect class="s" x=".5" y=".5" width="8" height="8" rx="1" fill="url(#eg)" stroke="#8e8e8e"/><path d="M2 4.5h5" stroke="#2a3f8f"/><path d="M4.5 2v5" stroke="#2a3f8f"/></svg>
<svg class="a" style="left:145px;top:401px;" width="13" height="13" viewBox="0 0 13 13"><rect x=".5" y=".5" width="12" height="4" fill="#f8b820" stroke="#7d7d7d"/><rect x=".5" y="6.5" width="4" height="2" fill="#f8b820" stroke="#7d7d7d"/><rect x="8.5" y="6.5" width="4" height="2" fill="#f8b820" stroke="#7d7d7d"/><rect x="4.5" y="10.5" width="4" height="2" fill="#f8b820" stroke="#7d7d7d"/><path d="M5 7.5h3M6.5 5v5" stroke="#7d7d7d"/></svg>
<div class="t" style="left:164px;top:403.19px;font-size:11px;letter-spacing:-0.2px">db_datareader</div>
<div class="a" style="left:113px;top:416px;width:1px;height:16px;background:repeating-linear-gradient(#8f8f8f 0 1px,transparent 1px 2px)"></div>
<div class="a" style="left:132px;top:416px;width:1px;height:9px;background:repeating-linear-gradient(#8f8f8f 0 1px,transparent 1px 2px)"></div>
<div class="a" style="left:132px;top:424px;width:1px;height:8px;background:repeating-linear-gradient(#8f8f8f 0 1px,transparent 1px 2px)"></div>
<div class="a" style="left:137px;top:424px;width:6px;height:1px;background:repeating-linear-gradient(90deg,#8f8f8f 0 1px,transparent 1px 2px)"></div>
<svg class="a" style="left:128px;top:420px;" width="9" height="9" viewBox="0 0 9 9"><rect class="s" x=".5" y=".5" width="8" height="8" rx="1" fill="url(#eg)" stroke="#8e8e8e"/><path d="M2 4.5h5" stroke="#2a3f8f"/><path d="M4.5 2v5" stroke="#2a3f8f"/></svg>
<svg class="a" style="left:145px;top:417px;" width="13" height="13" viewBox="0 0 13 13"><rect x=".5" y=".5" width="12" height="4" fill="#f8b820" stroke="#7d7d7d"/><rect x=".5" y="6.5" width="4" height="2" fill="#f8b820" stroke="#7d7d7d"/><rect x="8.5" y="6.5" width="4" height="2" fill="#f8b820" stroke="#7d7d7d"/><rect x="4.5" y="10.5" width="4" height="2" fill="#f8b820" stroke="#7d7d7d"/><path d="M5 7.5h3M6.5 5v5" stroke="#7d7d7d"/></svg>
<div class="t" style="left:164px;top:419.19px;font-size:11px;letter-spacing:-0.2px">db_datawriter</div>
<div class="a" style="left:113px;top:432px;width:1px;height:16px;background:repeating-linear-gradient(#8f8f8f 0 1px,transparent 1px 2px)"></div>
<div class="a" style="left:132px;top:432px;width:1px;height:9px;background:repeating-linear-gradient(#8f8f8f 0 1px,transparent 1px 2px)"></div>
<div class="a" style="left:132px;top:440px;width:1px;height:8px;background:repeating-linear-gradient(#8f8f8f 0 1px,transparent 1px 2px)"></div>
<div class="a" style="left:137px;top:440px;width:6px;height:1px;background:repeating-linear-gradient(90deg,#8f8f8f 0 1px,transparent 1px 2px)"></div>
<svg class="a" style="left:128px;top:436px;" width="9" height="9" viewBox="0 0 9 9"><rect class="s" x=".5" y=".5" width="8" height="8" rx="1" fill="url(#eg)" stroke="#8e8e8e"/><path d="M2 4.5h5" stroke="#2a3f8f"/><path d="M4.5 2v5" stroke="#2a3f8f"/></svg>
<svg class="a" style="left:145px;top:433px;" width="13" height="13" viewBox="0 0 13 13"><rect x=".5" y=".5" width="12" height="4" fill="#f8b820" stroke="#7d7d7d"/><rect x=".5" y="6.5" width="4" height="2" fill="#f8b820" stroke="#7d7d7d"/><rect x="8.5" y="6.5" width="4" height="2" fill="#f8b820" stroke="#7d7d7d"/><rect x="4.5" y="10.5" width="4" height="2" fill="#f8b820" stroke="#7d7d7d"/><path d="M5 7.5h3M6.5 5v5" stroke="#7d7d7d"/></svg>
<div class="t" style="left:164px;top:435.19px;font-size:11px;letter-spacing:-0.2px">db_ddladmin</div>
<div class="a" style="left:113px;top:448px;width:1px;height:16px;background:repeating-linear-gradient(#8f8f8f 0 1px,transparent 1px 2px)"></div>
<div class="a" style="left:132px;top:448px;width:1px;height:9px;background:repeating-linear-gradient(#8f8f8f 0 1px,transparent 1px 2px)"></div>
<div class="a" style="left:132px;top:456px;width:1px;height:8px;background:repeating-linear-gradient(#8f8f8f 0 1px,transparent 1px 2px)"></div>
<div class="a" style="left:137px;top:456px;width:6px;height:1px;background:repeating-linear-gradient(90deg,#8f8f8f 0 1px,transparent 1px 2px)"></div>
<svg class="a" style="left:128px;top:452px;" width="9" height="9" viewBox="0 0 9 9"><rect class="s" x=".5" y=".5" width="8" height="8" rx="1" fill="url(#eg)" stroke="#8e8e8e"/><path d="M2 4.5h5" stroke="#2a3f8f"/><path d="M4.5 2v5" stroke="#2a3f8f"/></svg>
<svg class="a" style="left:145px;top:449px;" width="13" height="13" viewBox="0 0 13 13"><rect x=".5" y=".5" width="12" height="4" fill="#f8b820" stroke="#7d7d7d"/><rect x=".5" y="6.5" width="4" height="2" fill="#f8b820" stroke="#7d7d7d"/><rect x="8.5" y="6.5" width="4" height="2" fill="#f8b820" stroke="#7d7d7d"/><rect x="4.5" y="10.5" width="4" height="2" fill="#f8b820" stroke="#7d7d7d"/><path d="M5 7.5h3M6.5 5v5" stroke="#7d7d7d"/></svg>
<div class="t" style="left:164px;top:451.19px;font-size:11px;letter-spacing:-0.2px">db_denydatareader</div>
<div class="a" style="left:113px;top:464px;width:1px;height:16px;background:repeating-linear-gradient(#8f8f8f 0 1px,transparent 1px 2px)"></div>
<div class="a" style="left:132px;top:464px;width:1px;height:9px;background:repeating-linear-gradient(#8f8f8f 0 1px,transparent 1px 2px)"></div>
<div class="a" style="left:132px;top:472px;width:1px;height:8px;background:repeating-linear-gradient(#8f8f8f 0 1px,transparent 1px 2px)"></div>
<div class="a" style="left:137px;top:472px;width:6px;height:1px;background:repeating-linear-gradient(90deg,#8f8f8f 0 1px,transparent 1px 2px)"></div>
<svg class="a" style="left:128px;top:468px;" width="9" height="9" viewBox="0 0 9 9"><rect class="s" x=".5" y=".5" width="8" height="8" rx="1" fill="url(#eg)" stroke="#8e8e8e"/><path d="M2 4.5h5" stroke="#2a3f8f"/><path d="M4.5 2v5" stroke="#2a3f8f"/></svg>
<svg class="a" style="left:145px;top:465px;" width="13" height="13" viewBox="0 0 13 13"><rect x=".5" y=".5" width="12" height="4" fill="#f8b820" stroke="#7d7d7d"/><rect x=".5" y="6.5" width="4" height="2" fill="#f8b820" stroke="#7d7d7d"/><rect x="8.5" y="6.5" width="4" height="2" fill="#f8b820" stroke="#7d7d7d"/><rect x="4.5" y="10.5" width="4" height="2" fill="#f8b820" stroke="#7d7d7d"/><path d="M5 7.5h3M6.5 5v5" stroke="#7d7d7d"/></svg>
<div class="t" style="left:164px;top:467.19px;font-size:11px;letter-spacing:-0.2px">db_denydatawriter</div>
<div class="a" style="left:113px;top:480px;width:1px;height:16px;background:repeating-linear-gradient(#8f8f8f 0 1px,transparent 1px 2px)"></div>
<div class="a" style="left:132px;top:480px;width:1px;height:9px;background:repeating-linear-gradient(#8f8f8f 0 1px,transparent 1px 2px)"></div>
<div class="a" style="left:132px;top:488px;width:1px;height:8px;background:repeating-linear-gradient(#8f8f8f 0 1px,transparent 1px 2px)"></div>
<div class="a" style="left:137px;top:488px;width:6px;height:1px;background:repeating-linear-gradient(90deg,#8f8f8f 0 1px,transparent 1px 2px)"></div>
<svg class="a" style="left:128px;top:484px;" width="9" height="9" viewBox="0 0 9 9"><rect class="s" x=".5" y=".5" width="8" height="8" rx="1" fill="url(#eg)" stroke="#8e8e8e"/><path d="M2 4.5h5" stroke="#2a3f8f"/><path d="M4.5 2v5" stroke="#2a3f8f"/></svg>
<svg class="a" style="left:145px;top:481px;" width="13" height="13" viewBox="0 0 13 13"><rect x=".5" y=".5" width="12" height="4" fill="#f8b820" stroke="#7d7d7d"/><rect x=".5" y="6.5" width="4" height="2" fill="#f8b820" stroke="#7d7d7d"/><rect x="8.5" y="6.5" width="4" height="2" fill="#f8b820" stroke="#7d7d7d"/><rect x="4.5" y="10.5" width="4" height="2" fill="#f8b820" stroke="#7d7d7d"/><path d="M5 7.5h3M6.5 5v5" stroke="#7d7d7d"/></svg>
<div class="t" style="left:164px;top:483.19px;font-size:11px;letter-spacing:-0.2px">db_owner</div>
<div class="a" style="left:113px;top:496px;width:1px;height:16px;background:repeating-linear-gradient(#8f8f8f 0 1px,transparent 1px 2px)"></div>
<div class="a" style="left:132px;top:496px;width:1px;height:9px;background:repeating-linear-gradient(#8f8f8f 0 1px,transparent 1px 2px)"></div>
<div class="a" style="left:132px;top:504px;width:1px;height:8px;background:repeating-linear-gradient(#8f8f8f 0 1px,transparent 1px 2px)"></div>
<div class="a" style="left:137px;top:504px;width:6px;height:1px;background:repeating-linear-gradient(90deg,#8f8f8f 0 1px,transparent 1px 2px)"></div>
<svg class="a" style="left:128px;top:500px;" width="9" height="9" viewBox="0 0 9 9"><rect class="s" x=".5" y=".5" width="8" height="8" rx="1" fill="url(#eg)" stroke="#8e8e8e"/><path d="M2 4.5h5" stroke="#2a3f8f"/><path d="M4.5 2v5" stroke="#2a3f8f"/></svg>
<svg class="a" style="left:145px;top:497px;" width="13" height="13" viewBox="0 0 13 13"><rect x=".5" y=".5" width="12" height="4" fill="#f8b820" stroke="#7d7d7d"/><rect x=".5" y="6.5" width="4" height="2" fill="#f8b820" stroke="#7d7d7d"/><rect x="8.5" y="6.5" width="4" height="2" fill="#f8b820" stroke="#7d7d7d"/><rect x="4.5" y="10.5" width="4" height="2" fill="#f8b820" stroke="#7d7d7d"/><path d="M5 7.5h3M6.5 5v5" stroke="#7d7d7d"/></svg>
<div class="t" style="left:164px;top:499.19px;font-size:11px;letter-spacing:-0.2px">db_securityadmin</div>
<div class="a" style="left:113px;top:512px;width:1px;height:16px;background:repeating-linear-gradient(#8f8f8f 0 1px,transparent 1px 2px)"></div>
<div class="a" style="left:132px;top:512px;width:1px;height:9px;background:repeating-linear-gradient(#8f8f8f 0 1px,transparent 1px 2px)"></div>
<div class="a" style="left:132px;top:520px;width:1px;height:8px;background:repeating-linear-gradient(#8f8f8f 0 1px,transparent 1px 2px)"></div>
<div class="a" style="left:137px;top:520px;width:6px;height:1px;background:repeating-linear-gradient(90deg,#8f8f8f 0 1px,transparent 1px 2px)"></div>
<svg class="a" style="left:128px;top:516px;" width="9" height="9" viewBox="0 0 9 9"><rect class="s" x=".5" y=".5" width="8" height="8" rx="1" fill="url(#eg)" stroke="#8e8e8e"/><path d="M2 4.5h5" stroke="#2a3f8f"/></svg>
<svg class="a" style="left:145px;top:513px;" width="13" height="13" viewBox="0 0 13 13"><rect x=".5" y=".5" width="12" height="4" fill="#f8b820" stroke="#7d7d7d"/><rect x=".5" y="6.5" width="4" height="2" fill="#f8b820" stroke="#7d7d7d"/><rect x="8.5" y="6.5" width="4" height="2" fill="#f8b820" stroke="#7d7d7d"/><rect x="4.5" y="10.5" width="4" height="2" fill="#f8b820" stroke="#7d7d7d"/><path d="M5 7.5h3M6.5 5v5" stroke="#7d7d7d"/></svg>
<div class="t" style="left:164px;top:515.19px;font-size:11px;letter-spacing:-0.2px">dbo</div>
<div class="a" style="left:113px;top:528px;width:1px;height:16px;background:repeating-linear-gradient(#8f8f8f 0 1px,transparent 1px 2px)"></div>
<div class="a" style="left:132px;top:528px;width:1px;height:16px;background:repeating-linear-gradient(#8f8f8f 0 1px,transparent 1px 2px)"></div>
<div class="a" style="left:151px;top:528px;width:1px;height:9px;background:repeating-linear-gradient(#8f8f8f 0 1px,transparent 1px 2px)"></div>
<div class="a" style="left:151px;top:536px;width:1px;height:8px;background:repeating-linear-gradient(#8f8f8f 0 1px,transparent 1px 2px)"></div>
<div class="a" style="left:157px;top:536px;width:5px;height:1px;background:repeating-linear-gradient(90deg,#8f8f8f 0 1px,transparent 1px 2px)"></div>
<svg class="a" style="left:147px;top:532px;" width="9" height="9" viewBox="0 0 9 9"><rect class="s" x=".5" y=".5" width="8" height="8" rx="1" fill="url(#eg)" stroke="#8e8e8e"/><path d="M2 4.5h5" stroke="#2a3f8f"/></svg>
<svg class="a" style="left:164px;top:530px;" width="14" height="12" viewBox="0 0 14 12"><path d="M0 0h6l2 2h6v12H0z" fill="#6fa6cf"/><rect x="2" y="4" width="10" height="6" fill="#fff"/></svg>
<div class="t" style="left:182px;top:531.19px;font-size:11px;letter-spacing:-0.2px">Tables</div>
<div class="a" style="left:113px;top:544px;width:1px;height:16px;background:repeating-linear-gradient(#8f8f8f 0 1px,transparent 1px 2px)"></div>
<div class="a" style="left:132px;top:544px;width:1px;height:16px;background:repeating-linear-gradient(#8f8f8f 0 1px,transparent 1px 2px)"></div>
<div class="a" style="left:151px;top:544px;width:1px;height:16px;background:repeating-linear-gradient(#8f8f8f 0 1px,transparent 1px 2px)"></div>
<div class="a" style="left:170px;top:544px;width:1px;height:9px;background:repeating-linear-gradient(#8f8f8f 0 1px,transparent 1px 2px)"></div>
<div class="a" style="left:170px;top:552px;width:1px;height:8px;background:repeating-linear-gradient(#8f8f8f 0 1px,transparent 1px 2px)"></div>
<div class="a" style="left:175px;top:552px;width:6px;height:1px;background:repeating-linear-gradient(90deg,#8f8f8f 0 1px,transparent 1px 2px)"></div>
<svg class="a" style="left:166px;top:548px;" width="9" height="9" viewBox="0 0 9 9"><rect class="s" x=".5" y=".5" width="8" height="8" rx="1" fill="url(#eg)" stroke="#8e8e8e"/><path d="M2 4.5h5" stroke="#2a3f8f"/><path d="M4.5 2v5" stroke="#2a3f8f"/></svg>
<svg class="a" style="left:183px;top:546px;" width="14" height="12" viewBox="0 0 14 12"><path d="M0 0h6l2 2h6v12H0z" fill="#6fa6cf"/><rect x="2" y="4" width="10" height="6" fill="#fff"/></svg>
<div class="t" style="left:201px;top:547.19px;font-size:11px;letter-spacing:-0.2px">System Tables</div>
<div class="a" style="left:113px;top:560px;width:1px;height:16px;background:repeating-linear-gradient(#8f8f8f 0 1px,transparent 1px 2px)"></div>
<div class="a" style="left:132px;top:560px;width:1px;height:16px;background:repeating-linear-gradient(#8f8f8f 0 1px,transparent 1px 2px)"></div>
<div class="a" style="left:151px;top:560px;width:1px;height:16px;background:repeating-linear-gradient(#8f8f8f 0 1px,transparent 1px 2px)"></div>
<div class="a" style="left:170px;top:560px;width:1px;height:9px;background:repeating-linear-gradient(#8f8f8f 0 1px,transparent 1px 2px)"></div>
<div class="a" style="left:170px;top:568px;width:1px;height:8px;background:repeating-linear-gradient(#8f8f8f 0 1px,transparent 1px 2px)"></div>
<div class="a" style="left:175px;top:568px;width:6px;height:1px;background:repeating-linear-gradient(90deg,#8f8f8f 0 1px,transparent 1px 2px)"></div>
<svg class="a" style="left:166px;top:564px;" width="9" height="9" viewBox="0 0 9 9"><rect class="s" x=".5" y=".5" width="8" height="8" rx="1" fill="url(#eg)" stroke="#8e8e8e"/><path d="M2 4.5h5" stroke="#2a3f8f"/><path d="M4.5 2v5" stroke="#2a3f8f"/></svg>
<svg class="a" style="left:183px;top:562px;" width="13" height="12" viewBox="0 0 13 12"><rect x="0" y="0" width="13" height="12" fill="#8a8a8a"/><rect x="1" y="3" width="11" height="8" fill="#fff"/><rect x="4" y="3" width="1" height="8" fill="#b4b4b4"/><rect x="8" y="3" width="1" height="8" fill="#b4b4b4"/><rect x="1" y="5" width="11" height="1" fill="#b4b4b4"/><rect x="1" y="8" width="11" height="1" fill="#b4b4b4"/><rect x="0" y="0" width="13" height="3" fill="#3a8ac8"/><rect x="1" y="1" width="11" height="1" fill="#7cc8f8"/></svg>
<div class="t" style="left:201px;top:563.19px;font-size:11px;letter-spacing:-0.2px">dbo.AanslagGroep</div>
<div class="a" style="left:113px;top:576px;width:1px;height:16px;background:repeating-linear-gradient(#8f8f8f 0 1px,transparent 1px 2px)"></div>
<div class="a" style="left:132px;top:576px;width:1px;height:16px;background:repeating-linear-gradient(#8f8f8f 0 1px,transparent 1px 2px)"></div>
<div class="a" style="left:151px;top:576px;width:1px;height:16px;background:repeating-linear-gradient(#8f8f8f 0 1px,transparent 1px 2px)"></div>
<div class="a" style="left:170px;top:576px;width:1px;height:9px;background:repeating-linear-gradient(#8f8f8f 0 1px,transparent 1px 2px)"></div>
<div class="a" style="left:170px;top:584px;width:1px;height:8px;background:repeating-linear-gradient(#8f8f8f 0 1px,transparent 1px 2px)"></div>
<div class="a" style="left:175px;top:584px;width:6px;height:1px;background:repeating-linear-gradient(90deg,#8f8f8f 0 1px,transparent 1px 2px)"></div>
<svg class="a" style="left:166px;top:580px;" width="9" height="9" viewBox="0 0 9 9"><rect class="s" x=".5" y=".5" width="8" height="8" rx="1" fill="url(#eg)" stroke="#8e8e8e"/><path d="M2 4.5h5" stroke="#2a3f8f"/><path d="M4.5 2v5" stroke="#2a3f8f"/></svg>
<svg class="a" style="left:183px;top:578px;" width="13" height="12" viewBox="0 0 13 12"><rect x="0" y="0" width="13" height="12" fill="#8a8a8a"/><rect x="1" y="3" width="11" height="8" fill="#fff"/><rect x="4" y="3" width="1" height="8" fill="#b4b4b4"/><rect x="8" y="3" width="1" height="8" fill="#b4b4b4"/><rect x="1" y="5" width="11" height="1" fill="#b4b4b4"/><rect x="1" y="8" width="11" height="1" fill="#b4b4b4"/><rect x="0" y="0" width="13" height="3" fill="#3a8ac8"/><rect x="1" y="1" width="11" height="1" fill="#7cc8f8"/></svg>
<div class="t" style="left:201px;top:579.19px;font-size:11px;letter-spacing:-0.2px">dbo.AanslagOpslag</div>
<div class="a" style="left:113px;top:592px;width:1px;height:16px;background:repeating-linear-gradient(#8f8f8f 0 1px,transparent 1px 2px)"></div>
<div class="a" style="left:132px;top:592px;width:1px;height:16px;background:repeating-linear-gradient(#8f8f8f 0 1px,transparent 1px 2px)"></div>
<div class="a" style="left:151px;top:592px;width:1px;height:16px;background:repeating-linear-gradient(#8f8f8f 0 1px,transparent 1px 2px)"></div>
<div class="a" style="left:170px;top:592px;width:1px;height:9px;background:repeating-linear-gradient(#8f8f8f 0 1px,transparent 1px 2px)"></div>
<div class="a" style="left:170px;top:600px;width:1px;height:8px;background:repeating-linear-gradient(#8f8f8f 0 1px,transparent 1px 2px)"></div>
<div class="a" style="left:175px;top:600px;width:6px;height:1px;background:repeating-linear-gradient(90deg,#8f8f8f 0 1px,transparent 1px 2px)"></div>
<svg class="a" style="left:166px;top:596px;" width="9" height="9" viewBox="0 0 9 9"><rect class="s" x=".5" y=".5" width="8" height="8" rx="1" fill="url(#eg)" stroke="#8e8e8e"/><path d="M2 4.5h5" stroke="#2a3f8f"/></svg>
<svg class="a" style="left:183px;top:594px;" width="13" height="12" viewBox="0 0 13 12"><rect x="0" y="0" width="13" height="12" fill="#8a8a8a"/><rect x="1" y="3" width="11" height="8" fill="#fff"/><rect x="4" y="3" width="1" height="8" fill="#b4b4b4"/><rect x="8" y="3" width="1" height="8" fill="#b4b4b4"/><rect x="1" y="5" width="11" height="1" fill="#b4b4b4"/><rect x="1" y="8" width="11" height="1" fill="#b4b4b4"/><rect x="0" y="0" width="13" height="3" fill="#3a8ac8"/><rect x="1" y="1" width="11" height="1" fill="#7cc8f8"/></svg>
<div class="t" style="left:201px;top:595.19px;font-size:11px;letter-spacing:-0.2px">dbo.AanslagSoort</div>
<div class="a" style="left:113px;top:608px;width:1px;height:16px;background:repeating-linear-gradient(#8f8f8f 0 1px,transparent 1px 2px)"></div>
<div class="a" style="left:132px;top:608px;width:1px;height:16px;background:repeating-linear-gradient(#8f8f8f 0 1px,transparent 1px 2px)"></div>
<div class="a" style="left:151px;top:608px;width:1px;height:16px;background:repeating-linear-gradient(#8f8f8f 0 1px,transparent 1px 2px)"></div>
<div class="a" style="left:170px;top:608px;width:1px;height:16px;background:repeating-linear-gradient(#8f8f8f 0 1px,transparent 1px 2px)"></div>
<div class="a" style="left:189px;top:608px;width:1px;height:9px;background:repeating-linear-gradient(#8f8f8f 0 1px,transparent 1px 2px)"></div>
<div class="a" style="left:189px;top:616px;width:1px;height:8px;background:repeating-linear-gradient(#8f8f8f 0 1px,transparent 1px 2px)"></div>
<div class="a" style="left:195px;top:616px;width:5px;height:1px;background:repeating-linear-gradient(90deg,#8f8f8f 0 1px,transparent 1px 2px)"></div>
<svg class="a" style="left:185px;top:612px;" width="9" height="9" viewBox="0 0 9 9"><rect class="s" x=".5" y=".5" width="8" height="8" rx="1" fill="url(#eg)" stroke="#8e8e8e"/><path d="M2 4.5h5" stroke="#2a3f8f"/><path d="M4.5 2v5" stroke="#2a3f8f"/></svg>
<svg class="a" style="left:202px;top:610px;" width="14" height="12" viewBox="0 0 14 12"><path d="M0 0h6l2 2h6v12H0z" fill="#6fa6cf"/><rect x="2" y="4" width="10" height="6" fill="#fff"/></svg>
<div class="t" style="left:220px;top:611.19px;font-size:11px;letter-spacing:-0.2px">Columns</div>
<div class="a" style="left:113px;top:624px;width:1px;height:16px;background:repeating-linear-gradient(#8f8f8f 0 1px,transparent 1px 2px)"></div>
<div class="a" style="left:132px;top:624px;width:1px;height:16px;background:repeating-linear-gradient(#8f8f8f 0 1px,transparent 1px 2px)"></div>
<div class="a" style="left:151px;top:624px;width:1px;height:16px;background:repeating-linear-gradient(#8f8f8f 0 1px,transparent 1px 2px)"></div>
<div class="a" style="left:170px;top:624px;width:1px;height:16px;background:repeating-linear-gradient(#8f8f8f 0 1px,transparent 1px 2px)"></div>
<div class="a" style="left:189px;top:624px;width:1px;height:9px;background:repeating-linear-gradient(#8f8f8f 0 1px,transparent 1px 2px)"></div>
<div class="a" style="left:189px;top:632px;width:1px;height:8px;background:repeating-linear-gradient(#8f8f8f 0 1px,transparent 1px 2px)"></div>
<div class="a" style="left:195px;top:632px;width:5px;height:1px;background:repeating-linear-gradient(90deg,#8f8f8f 0 1px,transparent 1px 2px)"></div>
<svg class="a" style="left:185px;top:628px;" width="9" height="9" viewBox="0 0 9 9"><rect class="s" x=".5" y=".5" width="8" height="8" rx="1" fill="url(#eg)" stroke="#8e8e8e"/><path d="M2 4.5h5" stroke="#2a3f8f"/></svg>
<svg class="a" style="left:202px;top:626px;" width="14" height="12" viewBox="0 0 14 12"><path d="M0 0h6l2 2h6v12H0z" fill="#6fa6cf"/><rect x="2" y="4" width="10" height="6" fill="#fff"/></svg>
<div class="t" style="left:220px;top:627.19px;font-size:11px;letter-spacing:-0.2px">Constraints</div>
<div class="a" style="left:113px;top:640px;width:1px;height:16px;background:repeating-linear-gradient(#8f8f8f 0 1px,transparent 1px 2px)"></div>
<div class="a" style="left:132px;top:640px;width:1px;height:16px;background:repeating-linear-gradient(#8f8f8f 0 1px,transparent 1px 2px)"></div>
<div class="a" style="left:151px;top:640px;width:1px;height:16px;background:repeating-linear-gradient(#8f8f8f 0 1px,transparent 1px 2px)"></div>
<div class="a" style="left:170px;top:640px;width:1px;height:16px;background:repeating-linear-gradient(#8f8f8f 0 1px,transparent 1px 2px)"></div>
<div class="a" style="left:189px;top:640px;width:1px;height:16px;background:repeating-linear-gradient(#8f8f8f 0 1px,transparent 1px 2px)"></div>
<div class="a" style="left:208px;top:640px;width:1px;height:9px;background:repeating-linear-gradient(#8f8f8f 0 1px,transparent 1px 2px)"></div>
<div class="a" style="left:208px;top:648px;width:1px;height:8px;background:repeating-linear-gradient(#8f8f8f 0 1px,transparent 1px 2px)"></div>
<div class="a" style="left:213px;top:648px;width:6px;height:1px;background:repeating-linear-gradient(90deg,#8f8f8f 0 1px,transparent 1px 2px)"></div>
<svg class="a" style="left:204px;top:644px;" width="9" height="9" viewBox="0 0 9 9"><rect class="s" x=".5" y=".5" width="8" height="8" rx="1" fill="url(#eg)" stroke="#8e8e8e"/><path d="M2 4.5h5" stroke="#2a3f8f"/><path d="M4.5 2v5" stroke="#2a3f8f"/></svg>
<svg class="a" style="left:220px;top:640px;" width="16" height="16" viewBox="0 0 16 16"><rect x="0" y="5" width="13" height="11" fill="#8a8a8a"/><rect x="1" y="8" width="11" height="7" fill="#fff"/><rect x="4" y="8" width="1" height="7" fill="#b4b4b4"/><rect x="8" y="8" width="1" height="7" fill="#b4b4b4"/><rect x="0" y="5" width="13" height="3" fill="#3aa0d8"/><rect x="1" y="6" width="11" height="1" fill="#7cc8f8"/><rect x="6" y="2" width="1" height="7" fill="#8a8a8a"/><rect x="6" y="2" width="5" height="1" fill="#8a8a8a"/><rect x="11" y="0" width="5" height="5" fill="#f0e4b0"/><rect x="12" y="1" width="3" height="3" fill="#fdf8d8"/><rect x="5" y="9" width="3" height="1" fill="#1f3f8f"/><rect x="6" y="8" width="1" height="3" fill="#1f3f8f"/><rect x="5" y="11" width="3" height="4" fill="#fff"/><rect x="6" y="12" width="1" height="2" fill="#1f3f8f"/><rect x="10" y="10" width="5" height="5" fill="#e8dcb0"/><rect x="11" y="11" width="3" height="3" fill="#c0daf0"/></svg>
<div class="t" style="left:239px;top:643.19px;font-size:11px;letter-spacing:-0.2px">FK_AanslagSoort_TypeExport</div>
<div class="a" style="left:113px;top:656px;width:1px;height:16px;background:repeating-linear-gradient(#8f8f8f 0 1px,transparent 1px 2px)"></div>
<div class="a" style="left:132px;top:656px;width:1px;height:16px;background:repeating-linear-gradient(#8f8f8f 0 1px,transparent 1px 2px)"></div>
<div class="a" style="left:151px;top:656px;width:1px;height:16px;background:repeating-linear-gradient(#8f8f8f 0 1px,transparent 1px 2px)"></div>
<div class="a" style="left:170px;top:656px;width:1px;height:16px;background:repeating-linear-gradient(#8f8f8f 0 1px,transparent 1px 2px)"></div>
<div class="a" style="left:189px;top:656px;width:1px;height:16px;background:repeating-linear-gradient(#8f8f8f 0 1px,transparent 1px 2px)"></div>
<div class="a" style="left:208px;top:656px;width:1px;height:9px;background:repeating-linear-gradient(#8f8f8f 0 1px,transparent 1px 2px)"></div>
<div class="a" style="left:213px;top:664px;width:6px;height:1px;background:repeating-linear-gradient(90deg,#8f8f8f 0 1px,transparent 1px 2px)"></div>
<svg class="a" style="left:204px;top:660px;" width="9" height="9" viewBox="0 0 9 9"><rect class="s" x=".5" y=".5" width="8" height="8" rx="1" fill="url(#eg)" stroke="#8e8e8e"/><path d="M2 4.5h5" stroke="#2a3f8f"/><path d="M4.5 2v5" stroke="#2a3f8f"/></svg>
<svg class="a" style="left:220px;top:656px;" width="16" height="16" viewBox="0 0 16 16"><rect x="0" y="5" width="13" height="11" fill="#8a8a8a"/><rect x="1" y="8" width="11" height="7" fill="#fff"/><rect x="4" y="8" width="1" height="7" fill="#b4b4b4"/><rect x="8" y="8" width="1" height="7" fill="#b4b4b4"/><rect x="0" y="5" width="13" height="3" fill="#3aa0d8"/><rect x="1" y="6" width="11" height="1" fill="#7cc8f8"/><rect x="6" y="2" width="1" height="7" fill="#8a8a8a"/><rect x="6" y="2" width="5" height="1" fill="#8a8a8a"/><rect x="11" y="0" width="5" height="5" fill="#f0e4b0"/><rect x="12" y="1" width="3" height="3" fill="#fdf8d8"/><rect x="5" y="9" width="3" height="1" fill="#1f3f8f"/><rect x="6" y="8" width="1" height="3" fill="#1f3f8f"/><rect x="5" y="11" width="3" height="4" fill="#fff"/><rect x="6" y="12" width="1" height="2" fill="#1f3f8f"/></svg>
<div class="a" style="left:238px;top:656px;width:88px;height:15px;background:#d4d4d4"></div>
<div class="t" style="left:239px;top:659.19px;font-size:11px;letter-spacing:-0.2px">PK_AanslagSoort</div>
<div class="a" style="left:113px;top:672px;width:1px;height:16px;background:repeating-linear-gradient(#8f8f8f 0 1px,transparent 1px 2px)"></div>
<div class="a" style="left:132px;top:672px;width:1px;height:16px;background:repeating-linear-gradient(#8f8f8f 0 1px,transparent 1px 2px)"></div>
<div class="a" style="left:151px;top:672px;width:1px;height:16px;background:repeating-linear-gradient(#8f8f8f 0 1px,transparent 1px 2px)"></div>
<div class="a" style="left:170px;top:672px;width:1px;height:16px;background:repeating-linear-gradient(#8f8f8f 0 1px,transparent 1px 2px)"></div>
<div class="a" style="left:189px;top:672px;width:1px;height:9px;background:repeating-linear-gradient(#8f8f8f 0 1px,transparent 1px 2px)"></div>
<div class="a" style="left:189px;top:680px;width:1px;height:8px;background:repeating-linear-gradient(#8f8f8f 0 1px,transparent 1px 2px)"></div>
<div class="a" style="left:195px;top:680px;width:5px;height:1px;background:repeating-linear-gradient(90deg,#8f8f8f 0 1px,transparent 1px 2px)"></div>
<svg class="a" style="left:185px;top:676px;" width="9" height="9" viewBox="0 0 9 9"><rect class="s" x=".5" y=".5" width="8" height="8" rx="1" fill="url(#eg)" stroke="#8e8e8e"/><path d="M2 4.5h5" stroke="#2a3f8f"/><path d="M4.5 2v5" stroke="#2a3f8f"/></svg>
<svg class="a" style="left:202px;top:674px;" width="14" height="12" viewBox="0 0 14 12"><path d="M0 0h6l2 2h6v12H0z" fill="#6fa6cf"/><rect x="2" y="4" width="10" height="6" fill="#fff"/></svg>
<div class="t" style="left:220px;top:675.19px;font-size:11px;letter-spacing:-0.2px">Dependencies</div>
<div class="a" style="left:113px;top:688px;width:1px;height:16px;background:repeating-linear-gradient(#8f8f8f 0 1px,transparent 1px 2px)"></div>
<div class="a" style="left:132px;top:688px;width:1px;height:16px;background:repeating-linear-gradient(#8f8f8f 0 1px,transparent 1px 2px)"></div>
<div class="a" style="left:151px;top:688px;width:1px;height:16px;background:repeating-linear-gradient(#8f8f8f 0 1px,transparent 1px 2px)"></div>
<div class="a" style="left:170px;top:688px;width:1px;height:16px;background:repeating-linear-gradient(#8f8f8f 0 1px,transparent 1px 2px)"></div>
<div class="a" style="left:189px;top:688px;width:1px;height:9px;background:repeating-linear-gradient(#8f8f8f 0 1px,transparent 1px 2px)"></div>
<div class="a" style="left:189px;top:696px;width:1px;height:8px;background:repeating-linear-gradient(#8f8f8f 0 1px,transparent 1px 2px)"></div>
<div class="a" style="left:191px;top:696px;width:9px;height:1px;background:repeating-linear-gradient(90deg,#8f8f8f 0 1px,transparent 1px 2px)"></div>
<svg class="a" style="left:202px;top:690px;" width="14" height="12" viewBox="0 0 14 12"><path d="M0 0h6l2 2h6v12H0z" fill="#6fa6cf"/><rect x="2" y="4" width="10" height="6" fill="#fff"/></svg>
<div class="t" style="left:220px;top:691.19px;font-size:11px;letter-spacing:-0.2px">Indexes</div>
<div class="a" style="left:113px;top:704px;width:1px;height:16px;background:repeating-linear-gradient(#8f8f8f 0 1px,transparent 1px 2px)"></div>
<div class="a" style="left:132px;top:704px;width:1px;height:16px;background:repeating-linear-gradient(#8f8f8f 0 1px,transparent 1px 2px)"></div>
<div class="a" style="left:151px;top:704px;width:1px;height:16px;background:repeating-linear-gradient(#8f8f8f 0 1px,transparent 1px 2px)"></div>
<div class="a" style="left:170px;top:704px;width:1px;height:16px;background:repeating-linear-gradient(#8f8f8f 0 1px,transparent 1px 2px)"></div>
<div class="a" style="left:189px;top:704px;width:1px;height:9px;background:repeating-linear-gradient(#8f8f8f 0 1px,transparent 1px 2px)"></div>
<div class="a" style="left:195px;top:712px;width:5px;height:1px;background:repeating-linear-gradient(90deg,#8f8f8f 0 1px,transparent 1px 2px)"></div>
<svg class="a" style="left:185px;top:708px;" width="9" height="9" viewBox="0 0 9 9"><rect class="s" x=".5" y=".5" width="8" height="8" rx="1" fill="url(#eg)" stroke="#8e8e8e"/><path d="M2 4.5h5" stroke="#2a3f8f"/><path d="M4.5 2v5" stroke="#2a3f8f"/></svg>
<svg class="a" style="left:202px;top:706px;" width="14" height="12" viewBox="0 0 14 12"><path d="M0 0h6l2 2h6v12H0z" fill="#6fa6cf"/><rect x="2" y="4" width="10" height="6" fill="#fff"/></svg>
<div class="t" style="left:220px;top:707.19px;font-size:11px;letter-spacing:-0.2px">Triggers</div>
<div class="a" style="left:113px;top:720px;width:1px;height:16px;background:repeating-linear-gradient(#8f8f8f 0 1px,transparent 1px 2px)"></div>
<div class="a" style="left:132px;top:720px;width:1px;height:16px;background:repeating-linear-gradient(#8f8f8f 0 1px,transparent 1px 2px)"></div>
<div class="a" style="left:151px;top:720px;width:1px;height:16px;background:repeating-linear-gradient(#8f8f8f 0 1px,transparent 1px 2px)"></div>
<div class="a" style="left:170px;top:720px;width:1px;height:9px;background:repeating-linear-gradient(#8f8f8f 0 1px,transparent 1px 2px)"></div>
<div class="a" style="left:175px;top:728px;width:6px;height:1px;background:repeating-linear-gradient(90deg,#8f8f8f 0 1px,transparent 1px 2px)"></div>
<svg class="a" style="left:166px;top:724px;" width="9" height="9" viewBox="0 0 9 9"><rect class="s" x=".5" y=".5" width="8" height="8" rx="1" fill="url(#eg)" stroke="#8e8e8e"/><path d="M2 4.5h5" stroke="#2a3f8f"/><path d="M4.5 2v5" stroke="#2a3f8f"/></svg>
<svg class="a" style="left:183px;top:722px;" width="13" height="12" viewBox="0 0 13 12"><rect x="0" y="0" width="13" height="12" fill="#8a8a8a"/><rect x="1" y="3" width="11" height="8" fill="#fff"/><rect x="4" y="3" width="1" height="8" fill="#b4b4b4"/><rect x="8" y="3" width="1" height="8" fill="#b4b4b4"/><rect x="1" y="5" width="11" height="1" fill="#b4b4b4"/><rect x="1" y="8" width="11" height="1" fill="#b4b4b4"/><rect x="0" y="0" width="13" height="3" fill="#3a8ac8"/><rect x="1" y="1" width="11" height="1" fill="#7cc8f8"/></svg>
<div class="t" style="left:201px;top:723.19px;font-size:11px;letter-spacing:-0.2px">dbo.TypeExport</div>
<div class="a" style="left:113px;top:736px;width:1px;height:16px;background:repeating-linear-gradient(#8f8f8f 0 1px,transparent 1px 2px)"></div>
<div class="a" style="left:132px;top:736px;width:1px;height:16px;background:repeating-linear-gradient(#8f8f8f 0 1px,transparent 1px 2px)"></div>
<div class="a" style="left:151px;top:736px;width:1px;height:9px;background:repeating-linear-gradient(#8f8f8f 0 1px,transparent 1px 2px)"></div>
<div class="a" style="left:151px;top:744px;width:1px;height:8px;background:repeating-linear-gradient(#8f8f8f 0 1px,transparent 1px 2px)"></div>
<div class="a" style="left:157px;top:744px;width:5px;height:1px;background:repeating-linear-gradient(90deg,#8f8f8f 0 1px,transparent 1px 2px)"></div>
<svg class="a" style="left:147px;top:740px;" width="9" height="9" viewBox="0 0 9 9"><rect class="s" x=".5" y=".5" width="8" height="8" rx="1" fill="url(#eg)" stroke="#8e8e8e"/><path d="M2 4.5h5" stroke="#2a3f8f"/><path d="M4.5 2v5" stroke="#2a3f8f"/></svg>
<svg class="a" style="left:164px;top:738px;" width="14" height="12" viewBox="0 0 14 12"><path d="M0 0h6l2 2h6v12H0z" fill="#6fa6cf"/><rect x="2" y="4" width="10" height="6" fill="#fff"/></svg>
<div class="t" style="left:182px;top:739.19px;font-size:11px;letter-spacing:-0.2px">Views</div>
<div class="a" style="left:113px;top:752px;width:1px;height:16px;background:repeating-linear-gradient(#8f8f8f 0 1px,transparent 1px 2px)"></div>
<div class="a" style="left:132px;top:752px;width:1px;height:16px;background:repeating-linear-gradient(#8f8f8f 0 1px,transparent 1px 2px)"></div>
<div class="a" style="left:151px;top:752px;width:1px;height:9px;background:repeating-linear-gradient(#8f8f8f 0 1px,transparent 1px 2px)"></div>
<div class="a" style="left:151px;top:760px;width:1px;height:8px;background:repeating-linear-gradient(#8f8f8f 0 1px,transparent 1px 2px)"></div>
<div class="a" style="left:157px;top:760px;width:5px;height:1px;background:repeating-linear-gradient(90deg,#8f8f8f 0 1px,transparent 1px 2px)"></div>
<svg class="a" style="left:147px;top:756px;" width="9" height="9" viewBox="0 0 9 9"><rect class="s" x=".5" y=".5" width="8" height="8" rx="1" fill="url(#eg)" stroke="#8e8e8e"/><path d="M2 4.5h5" stroke="#2a3f8f"/><path d="M4.5 2v5" stroke="#2a3f8f"/></svg>
<svg class="a" style="left:164px;top:754px;" width="14" height="12" viewBox="0 0 14 12"><path d="M0 0h6l2 2h6v12H0z" fill="#6fa6cf"/><rect x="2" y="4" width="10" height="6" fill="#fff"/></svg>
<div class="t" style="left:182px;top:755.19px;font-size:11px;letter-spacing:-0.2px">Synonyms</div>
<div class="a" style="left:113px;top:768px;width:1px;height:16px;background:repeating-linear-gradient(#8f8f8f 0 1px,transparent 1px 2px)"></div>
<div class="a" style="left:132px;top:768px;width:1px;height:16px;background:repeating-linear-gradient(#8f8f8f 0 1px,transparent 1px 2px)"></div>
<div class="a" style="left:151px;top:768px;width:1px;height:9px;background:repeating-linear-gradient(#8f8f8f 0 1px,transparent 1px 2px)"></div>
<div class="a" style="left:151px;top:776px;width:1px;height:8px;background:repeating-linear-gradient(#8f8f8f 0 1px,transparent 1px 2px)"></div>
<div class="a" style="left:157px;top:776px;width:5px;height:1px;background:repeating-linear-gradient(90deg,#8f8f8f 0 1px,transparent 1px 2px)"></div>
<svg class="a" style="left:147px;top:772px;" width="9" height="9" viewBox="0 0 9 9"><rect class="s" x=".5" y=".5" width="8" height="8" rx="1" fill="url(#eg)" stroke="#8e8e8e"/><path d="M2 4.5h5" stroke="#2a3f8f"/><path d="M4.5 2v5" stroke="#2a3f8f"/></svg>
<svg class="a" style="left:164px;top:770px;" width="14" height="12" viewBox="0 0 14 12"><path d="M0 0h6l2 2h6v12H0z" fill="#6fa6cf"/><rect x="2" y="4" width="10" height="6" fill="#fff"/></svg>
<div class="t" style="left:182px;top:771.19px;font-size:11px;letter-spacing:-0.2px">Sequences</div>
<div class="a" style="left:113px;top:784px;width:1px;height:16px;background:repeating-linear-gradient(#8f8f8f 0 1px,transparent 1px 2px)"></div>
<div class="a" style="left:132px;top:784px;width:1px;height:16px;background:repeating-linear-gradient(#8f8f8f 0 1px,transparent 1px 2px)"></div>
<div class="a" style="left:151px;top:784px;width:1px;height:9px;background:repeating-linear-gradient(#8f8f8f 0 1px,transparent 1px 2px)"></div>
<div class="a" style="left:151px;top:792px;width:1px;height:8px;background:repeating-linear-gradient(#8f8f8f 0 1px,transparent 1px 2px)"></div>
<div class="a" style="left:157px;top:792px;width:5px;height:1px;background:repeating-linear-gradient(90deg,#8f8f8f 0 1px,transparent 1px 2px)"></div>
<svg class="a" style="left:147px;top:788px;" width="9" height="9" viewBox="0 0 9 9"><rect class="s" x=".5" y=".5" width="8" height="8" rx="1" fill="url(#eg)" stroke="#8e8e8e"/><path d="M2 4.5h5" stroke="#2a3f8f"/><path d="M4.5 2v5" stroke="#2a3f8f"/></svg>
<svg class="a" style="left:164px;top:786px;" width="14" height="12" viewBox="0 0 14 12"><path d="M0 0h6l2 2h6v12H0z" fill="#6fa6cf"/><rect x="2" y="4" width="10" height="6" fill="#fff"/></svg>
<div class="t" style="left:182px;top:787.19px;font-size:11px;letter-spacing:-0.2px">Constraints</div>
<div class="a" style="left:113px;top:800px;width:1px;height:16px;background:repeating-linear-gradient(#8f8f8f 0 1px,transparent 1px 2px)"></div>
<div class="a" style="left:132px;top:800px;width:1px;height:16px;background:repeating-linear-gradient(#8f8f8f 0 1px,transparent 1px 2px)"></div>
<div class="a" style="left:151px;top:800px;width:1px;height:9px;background:repeating-linear-gradient(#8f8f8f 0 1px,transparent 1px 2px)"></div>
<div class="a" style="left:151px;top:808px;width:1px;height:8px;background:repeating-linear-gradient(#8f8f8f 0 1px,transparent 1px 2px)"></div>
<div class="a" style="left:157px;top:808px;width:5px;height:1px;background:repeating-linear-gradient(90deg,#8f8f8f 0 1px,transparent 1px 2px)"></div>
<svg class="a" style="left:147px;top:804px;" width="9" height="9" viewBox="0 0 9 9"><rect class="s" x=".5" y=".5" width="8" height="8" rx="1" fill="url(#eg)" stroke="#8e8e8e"/><path d="M2 4.5h5" stroke="#2a3f8f"/><path d="M4.5 2v5" stroke="#2a3f8f"/></svg>
<svg class="a" style="left:164px;top:802px;" width="14" height="12" viewBox="0 0 14 12"><path d="M0 0h6l2 2h6v12H0z" fill="#6fa6cf"/><rect x="2" y="4" width="10" height="6" fill="#fff"/></svg>
<div class="t" style="left:182px;top:803.19px;font-size:11px;letter-spacing:-0.2px">Indexes</div>
<div class="a" style="left:113px;top:816px;width:1px;height:16px;background:repeating-linear-gradient(#8f8f8f 0 1px,transparent 1px 2px)"></div>
<div class="a" style="left:132px;top:816px;width:1px;height:16px;background:repeating-linear-gradient(#8f8f8f 0 1px,transparent 1px 2px)"></div>
<div class="a" style="left:151px;top:816px;width:1px;height:9px;background:repeating-linear-gradient(#8f8f8f 0 1px,transparent 1px 2px)"></div>
<div class="a" style="left:151px;top:824px;width:1px;height:8px;background:repeating-linear-gradient(#8f8f8f 0 1px,transparent 1px 2px)"></div>
<div class="a" style="left:157px;top:824px;width:5px;height:1px;background:repeating-linear-gradient(90deg,#8f8f8f 0 1px,transparent 1px 2px)"></div>
<svg class="a" style="left:147px;top:820px;" width="9" height="9" viewBox="0 0 9 9"><rect class="s" x=".5" y=".5" width="8" height="8" rx="1" fill="url(#eg)" stroke="#8e8e8e"/><path d="M2 4.5h5" stroke="#2a3f8f"/><path d="M4.5 2v5" stroke="#2a3f8f"/></svg>
<svg class="a" style="left:164px;top:818px;" width="14" height="12" viewBox="0 0 14 12"><path d="M0 0h6l2 2h6v12H0z" fill="#6fa6cf"/><rect x="2" y="4" width="10" height="6" fill="#fff"/></svg>
<div class="t" style="left:182px;top:819.19px;font-size:11px;letter-spacing:-0.2px">Triggers</div>
<div class="a" style="left:113px;top:832px;width:1px;height:16px;background:repeating-linear-gradient(#8f8f8f 0 1px,transparent 1px 2px)"></div>
<div class="a" style="left:132px;top:832px;width:1px;height:16px;background:repeating-linear-gradient(#8f8f8f 0 1px,transparent 1px 2px)"></div>
<div class="a" style="left:151px;top:832px;width:1px;height:9px;background:repeating-linear-gradient(#8f8f8f 0 1px,transparent 1px 2px)"></div>
<div class="a" style="left:151px;top:840px;width:1px;height:8px;background:repeating-linear-gradient(#8f8f8f 0 1px,transparent 1px 2px)"></div>
<div class="a" style="left:157px;top:840px;width:5px;height:1px;background:repeating-linear-gradient(90deg,#8f8f8f 0 1px,transparent 1px 2px)"></div>
<svg class="a" style="left:147px;top:836px;" width="9" height="9" viewBox="0 0 9 9"><rect class="s" x=".5" y=".5" width="8" height="8" rx="1" fill="url(#eg)" stroke="#8e8e8e"/><path d="M2 4.5h5" stroke="#2a3f8f"/><path d="M4.5 2v5" stroke="#2a3f8f"/></svg>
<svg class="a" style="left:164px;top:834px;" width="14" height="12" viewBox="0 0 14 12"><path d="M0 0h6l2 2h6v12H0z" fill="#6fa6cf"/><rect x="2" y="4" width="10" height="6" fill="#fff"/></svg>
<div class="t" style="left:182px;top:835.19px;font-size:11px;letter-spacing:-0.2px">Stored Procedures</div>
</div></div>
<div class="a" style="left:442px;top:82px;width:867px;height:766px;background:#f0f0f0"></div>
<div class="a" style="left:445px;top:82px;width:861px;height:22px;background:#fff"></div>
<div class="a" style="left:445px;top:104px;width:479px;height:1px;background:#a0a0a0"></div>
<div class="a" style="left:1248px;top:104px;width:58px;height:1px;background:#a0a0a0"></div>
<div class="t" style="left:449px;top:89.49px;font-size:11px;">.72.24.1.199 2016 [Untitled 37]*</div>
<svg class="a" style="left:619px;top:91px;" width="9" height="8" viewBox="0 0 9 8"><path class="s" d="M.5 .5L8 7M8 .5L.5 7" stroke="#000" stroke-width="1.4"/></svg>
<div class="a" style="left:633px;top:88px;width:1px;height:14px;background:#c8c8c8"></div>
<svg class="a" style="left:637px;top:86px;" width="17" height="17" viewBox="0 0 17 17"><rect x="1" y="0" width="11" height="2" fill="#3a78c0"/><rect x="2.5" y="2.5" width="13" height="11" fill="#fff" stroke="#b0b0b0"/><rect x="2" y="2" width="14" height="2" fill="#56b0e8"/><path d="M3 7.5h12M3 10.5h12M6.5 4v9M10.5 4v9" stroke="#d8d8d8"/><g class="s"><circle cx="4.5" cy="11.5" r="3.6" fill="none" stroke="#d89a30" stroke-width="1.6" stroke-dasharray="1.5 1.3"/><circle cx="4.5" cy="11.5" r="2.2" fill="#fff" stroke="#d89a30" stroke-width="1.4"/><circle cx="11" cy="11" r="2.6" fill="#c6dff0" stroke="#888" stroke-width="1.2"/><path d="M13 13l3 3" stroke="#888" stroke-width="1.4"/></g></svg>
<div class="t" style="left:657px;top:89.49px;font-size:11px;">sa@SQL Server 172.24.1.199 2016 [Untitled 38]*</div>
<svg class="a" style="left:910px;top:91px;" width="9" height="8" viewBox="0 0 9 8"><path class="s" d="M.5 .5L8 7M8 .5L.5 7" stroke="#000" stroke-width="1.4"/></svg>
<div class="a" style="left:924px;top:84px;width:324px;height:22px;background:#e3e3e3;border:1px solid #a0a0a0;border-bottom:none"></div>
<svg class="a" style="left:930px;top:86px;" width="17" height="17" viewBox="0 0 17 17"><rect x="1" y="0" width="11" height="2" fill="#3a78c0"/><rect x="2.5" y="2.5" width="13" height="11" fill="#fff" stroke="#b0b0b0"/><rect x="2" y="2" width="14" height="2" fill="#56b0e8"/><path d="M3 7.5h12M3 10.5h12M6.5 4v9M10.5 4v9" stroke="#d8d8d8"/><g class="s"><circle cx="4.5" cy="11.5" r="3.6" fill="none" stroke="#d89a30" stroke-width="1.6" stroke-dasharray="1.5 1.3"/><circle cx="4.5" cy="11.5" r="2.2" fill="#fff" stroke="#d89a30" stroke-width="1.4"/><circle cx="11" cy="11" r="2.6" fill="#c6dff0" stroke="#888" stroke-width="1.2"/><path d="M13 13l3 3" stroke="#888" stroke-width="1.4"/></g></svg>
<div class="t" style="left:950px;top:87.74px;font-size:12px;font-weight:bold">sa@SQL Server 172.24.1.199 2016 [Untitled 39]*</div>
<svg class="a" style="left:1234px;top:91px;" width="9" height="8" viewBox="0 0 9 8"><path class="s" d="M.5 .5L8 7M8 .5L.5 7" stroke="#000" stroke-width="1.4"/></svg>
<svg class="a" style="left:1258px;top:89px;" width="6" height="10" viewBox="0 0 6 10"><path class="s" d="M6 0v10L0 5z" fill="#111"/></svg>
<svg class="a" style="left:1275px;top:89px;" width="6" height="10" viewBox="0 0 6 10"><path class="s" d="M0 0v10L6 5z" fill="#111"/></svg>
<svg class="a" style="left:1289px;top:89px;" width="9" height="10" viewBox="0 0 9 10"><rect x="0" y="0" width="9" height="10" fill="#111"/><rect x="1" y="1" width="7" height="8" fill="#fff"/><rect x="2" y="3" width="5" height="1" fill="#111"/><rect x="2" y="5" width="5" height="1" fill="#111"/><rect x="2" y="7" width="5" height="1" fill="#111"/></svg>
<div class="a" style="left:445px;top:104px;width:861px;height:741px;border:1px solid #a0a0a0;border-top:none"></div>
<div class="a" style="left:925px;top:104px;width:322px;height:2px;background:#e3e3e3"></div>
<div class="a" style="left:447px;top:106px;width:856px;height:70px;border:1px solid #a0a0a0;box-shadow:inset 1px 1px 0 #fff"></div>
<svg class="a" style="left:454px;top:112px;" width="11" height="15" viewBox="0 0 11 15"><path d="M.5 .5h7l3 3v11h-10z" fill="#fff" stroke="#999"/><path d="M5.5 5v6M2.5 8h6" stroke="#2a9a3a" stroke-width="1.3"/></svg>
<svg class="a" style="left:475px;top:112px;" width="14" height="14" viewBox="0 0 14 14"><path d="M.5 1.5h5l1 1h6v10h-12z" fill="#fcf0c8" stroke="#c09050"/><path class="s" d="M5 10l4-4M6 6h3v3" stroke="#3a8fdc" stroke-width="1.1" fill="none"/></svg>
<svg class="a" style="left:497px;top:112px;" width="14" height="15" viewBox="0 0 14 15"><path d="M.5 .5h12v12h-12z" fill="#f4f4f4" stroke="#888"/><rect x="3" y="1" width="7" height="4" fill="#fff" stroke="#888" stroke-width=".8"/><rect x="2" y="8" width="9" height="4" fill="#3a8fdc"/></svg>
<svg class="a" style="left:520px;top:112px;" width="14" height="15" viewBox="0 0 14 15"><path d="M.5 .5h12v12h-12z" fill="#f4f4f4" stroke="#888"/><rect x="3" y="1" width="7" height="4" fill="#fff" stroke="#888" stroke-width=".8"/><rect x="2" y="8" width="9" height="4" fill="#3a8fdc"/><path d="M5 14h1M7 14h1M9 14h1" stroke="#8a5cc0" stroke-width="1.5"/></svg>
<svg class="a" style="left:542px;top:112px;" width="14" height="15" viewBox="0 0 14 15"><path d="M.5 .5h12v12h-12z" fill="#f4f4f4" stroke="#888"/><rect x="3" y="1" width="7" height="4" fill="#fff" stroke="#888" stroke-width=".8"/><rect x="2" y="8" width="9" height="4" fill="#3a8fdc"/><rect x="6" y="8" width="8" height="6" fill="#fff" stroke="#8a5cc0"/></svg>
<div class="a" style="left:561px;top:109px;width:1px;height:19px;background:#a0a0a0"></div>
<svg class="a" style="left:567px;top:113px;" width="16" height="14" viewBox="0 0 16 14"><rect x="4" y="0" width="8" height="4" fill="#666"/><rect x="0" y="4" width="16" height="7" fill="#3a8fdc"/><rect x="4" y="8" width="8" height="6" fill="#fff" stroke="#555"/></svg>
<div class="a" style="left:588px;top:109px;width:1px;height:19px;background:#a0a0a0"></div>
<svg class="a" style="left:594px;top:112px;" width="17" height="15" viewBox="0 0 17 15"><rect x="1.5" y="1.5" width="11" height="10" fill="none" stroke="#3a8fdc" stroke-dasharray="2 1.5" stroke-width="1.3"/><path class="s" d="M9 6l6 6-3 .5 1.5 3-1 .5-1.5-3-2 2z" fill="#fff" stroke="#666"/></svg>
<svg class="a" style="left:617px;top:112px;" width="15" height="15" viewBox="0 0 15 15"><g class="s"><path d="M3 0l6 10M12 0L6 10" stroke="#666" stroke-width="1.3"/><circle cx="4" cy="12" r="2.3" fill="none" stroke="#3a8fdc" stroke-width="1.3"/><circle cx="11" cy="12" r="2.3" fill="none" stroke="#3a8fdc" stroke-width="1.3"/></g></svg>
<svg class="a" style="left:638px;top:112px;" width="16" height="15" viewBox="0 0 16 15"><path d="M.5 .5h8v10h-8z" fill="#fff" stroke="#888"/><path d="M5.5 4.5h10v10h-10z" fill="#fff" stroke="#888"/><path d="M2 3h4M2 5h4M2 7h4M7 7h7M7 9h7M7 11h7" stroke="#3a8fdc"/></svg>
<svg class="a" style="left:661px;top:112px;" width="16" height="15" viewBox="0 0 16 15"><rect x="0" y="2" width="10" height="13" fill="#c09060"/><rect x="3" y="0" width="4" height="3" fill="#fff" stroke="#888"/><path d="M6.5 6.5h6l3 3v5h-9z" fill="#fff" stroke="#888"/><path d="M8 11h5" stroke="#3a8fdc"/></svg>
<svg class="a" style="left:683px;top:112px;" width="15" height="15" viewBox="0 0 15 15"><path class="s" d="M4 2L1 6l4 3M1.5 6H9a4.5 4.5 0 0 1 0 9" stroke="#a87cc8" stroke-width="2.2" fill="none"/></svg>
<svg class="a" style="left:705px;top:112px;" width="15" height="15" viewBox="0 0 15 15"><path class="s" d="M11 2l3 4-4 3M13.5 6H6a4.5 4.5 0 0 0 0 9" stroke="#a87cc8" stroke-width="2.2" fill="none"/></svg>
<div class="a" style="left:725px;top:109px;width:1px;height:19px;background:#a0a0a0"></div>
<svg class="a" style="left:733px;top:112px;" width="14" height="14" viewBox="0 0 14 14"><path d="M.5 11V.5H8" stroke="#c8a070" fill="none"/><path d="M2.5 12V2.5H9" stroke="#c8a070" fill="none"/><g class="s"><circle cx="8" cy="7" r="3.2" fill="#c8e4f4" stroke="#888" stroke-width="1.2"/><path d="M10 9.5l3.5 3.5" stroke="#888" stroke-width="1.5"/></g></svg>
<svg class="a" style="left:755px;top:112px;" width="14" height="14" viewBox="0 0 14 14"><path d="M.5 11V.5H8" stroke="#c8a070" fill="none"/><path d="M2.5 12V2.5H9" stroke="#c8a070" fill="none"/><g class="s"><circle cx="8" cy="7" r="3.2" fill="#c8e4f4" stroke="#888" stroke-width="1.2"/><path d="M10 9.5l3.5 3.5" stroke="#888" stroke-width="1.5"/></g></svg>
<div class="t" style="left:756px;top:118.38px;font-size:9px;color:#aaa">A</div>
<div class="a" style="left:774px;top:109px;width:1px;height:19px;background:#a0a0a0"></div>
<div class="t" style="left:782px;top:115.34px;font-size:12px;color:#333">a</div>
<svg class="a" style="left:790px;top:112px;" width="6" height="4" viewBox="0 0 6 4"><path d="M0 0h6L3 4z" fill="#3a7fc8"/></svg>
<div class="t" style="left:804px;top:116.00px;font-size:13px;color:#333">A</div>
<svg class="a" style="left:811px;top:112px;" width="6" height="4" viewBox="0 0 6 4"><path d="M0 4h6L3 0z" fill="#3a7fc8"/></svg>
<svg class="a" style="left:453px;top:133px;" width="15" height="15" viewBox="0 0 15 15"><path class="s" d="M5 0v9l5-4.5zM10 0v9l5-4.5z" fill="#2aaa4a"/><g class="s"><circle cx="5" cy="10" r="3.3" fill="none" stroke="#888" stroke-width="2.2" stroke-dasharray="1.6 1"/><circle cx="5" cy="10" r="1.2" fill="#2a2"/></g></svg>
<svg class="a" style="left:478px;top:133px;" width="8" height="14" viewBox="0 0 8 14"><path class="s" d="M0 0v14l8-7z" fill="#2aaa4a"/></svg>
<svg class="a" style="left:496px;top:133px;" width="16" height="15" viewBox="0 0 16 15"><path class="s" d="M0 1v13l6-6.5z" fill="#2aaa4a"/><path d="M5.5 2.5h9v10h-9z" fill="#f8f4e8" stroke="#999"/><path d="M7 5h6M7 7h6M7 9h6" stroke="#e0a030"/></svg>
<svg class="a" style="left:519px;top:133px;" width="16" height="15" viewBox="0 0 16 15"><rect x=".5" y="2.5" width="13" height="12" fill="#fff" stroke="#888"/><rect x="0" y="2" width="14" height="2" fill="#3a8fdc"/><path d="M1 8.5h12M1 11.5h12M7.5 4v10" stroke="#aaa"/><path class="s" d="M1 4v10l6-5z" fill="#2aaa4a"/><path class="s" d="M8 10L15 1" stroke="#2a9a3a" stroke-width="1.6"/></svg>
<svg class="a" style="left:540px;top:133px;" width="16" height="15" viewBox="0 0 16 15"><rect x=".5" y="2.5" width="13" height="12" fill="#fff" stroke="#888"/><rect x="0" y="2" width="14" height="2" fill="#3a8fdc"/><path d="M9 6h4M9 9h4M9 12h4" stroke="#666" stroke-width="2"/><path class="s" d="M1 4v10l6-5z" fill="#2aaa4a"/></svg>
<svg class="a" style="left:563px;top:134px;" width="13" height="13" viewBox="0 0 13 13"><circle class="s" cx="6.5" cy="6.5" r="6.3" fill="#a8a8a8"/><path class="s" d="M4 4l5 5M9 4l-5 5" stroke="#ccc" stroke-width="1.3"/></svg>
<div class="a" style="left:583px;top:131px;width:1px;height:21px;background:#a0a0a0"></div>
<div class="a" style="left:586px;top:130px;width:22px;height:23px;background:#cce4f7;border:1px solid #3d8fe6"></div>
<svg class="a" style="left:589px;top:133px;" width="15" height="16" viewBox="0 0 15 16"><rect x="1" y="2" width="10" height="13" rx="2" fill="#3a8fcf"/><path d="M1 6h10M1 9h10M1 12h10" stroke="#8cc8f0"/><g class="s"><path d="M8 3a3 3 0 0 1 5 2l1.5-1M8 11a3 3 0 0 0 5-2l1.5 1" stroke="#e8a030" stroke-width="1.8" fill="none"/></g></svg>
<svg class="a" style="left:612px;top:134px;" width="13" height="14" viewBox="0 0 13 14"><rect x="1" y="0" width="12" height="14" rx="2" fill="#8f8f8f"/><path d="M0 7h3" stroke="#8f8f8f" stroke-width="2"/></svg>
<svg class="a" style="left:635px;top:134px;" width="13" height="14" viewBox="0 0 13 14"><rect x="1" y="0" width="12" height="14" rx="2" fill="#8f8f8f"/><path d="M0 7h3" stroke="#8f8f8f" stroke-width="2"/></svg>
<svg class="a" style="left:655px;top:133px;" width="17" height="15" viewBox="0 0 17 15"><g class="s"><path d="M8 2l6 5-4 5-5-5z" fill="#e8a850"/><path d="M12 3l3-3M14 5l2-2" stroke="#666" stroke-width="1.2"/><path d="M5 10L1 14" stroke="#444" stroke-width="1.5"/><path d="M5 9h4V7l4 3.5L9 14v-2H5z" fill="#f8c840" stroke="#c89020" stroke-width=".8"/></g></svg>
<svg class="a" style="left:677px;top:133px;" width="17" height="15" viewBox="0 0 17 15"><path d="M1 2h7M1 5h5" stroke="#888" stroke-width="1.6"/><rect x="1" y="9" width="8" height="6" fill="#888"/><g class="s"><path d="M8 2l6 5-4 5-5-5z" fill="#e8a850"/><path d="M12 3l3-3M14 5l2-2" stroke="#666" stroke-width="1.2"/><circle cx="5" cy="10" r="3.2" fill="#f6d0d0" stroke="#e04040" stroke-width="1.2"/><path d="M3.5 10h3" stroke="#555"/></g></svg>
<svg class="a" style="left:699px;top:133px;" width="14" height="15" viewBox="0 0 14 15"><path d="M5 1h8M5 4h8M5 7h8" stroke="#888" stroke-width="1.6"/><rect x="5" y="9" width="8" height="6" fill="#888"/><rect x="10" y="11" width="1" height="1" fill="#2d2"/><path class="s" d="M0 8h4V5.5L8.5 9.5 4 13.5V11H0z" fill="#f8c840" stroke="#c89020" stroke-width=".8"/></svg>
<div class="a" style="left:720px;top:131px;width:1px;height:21px;background:#a0a0a0"></div>
<div class="a" style="left:723px;top:130px;width:22px;height:23px;background:#cce4f7;border:1px solid #3d8fe6"></div>
<div class="a" style="left:745px;top:130px;width:22px;height:23px;background:#cce4f7;border:1px solid #3d8fe6"></div>
<svg class="a" style="left:726px;top:133px;" width="17" height="16" viewBox="0 0 17 16"><rect x="5.5" y=".5" width="11" height="10" fill="#f4ecd8" stroke="#6a5a4a"/><path d="M7 3h4M7 5h4M7 7h4M12 3h3M12 7h3" stroke="#6a5a4a"/><rect x=".5" y="6.5" width="10" height="9" fill="#fff" stroke="#888"/><rect x="0" y="6" width="6" height="2" fill="#56b0e8"/><path d="M1 11.5h9M5.5 8v7" stroke="#aaa"/></svg>
<svg class="a" style="left:748px;top:133px;" width="17" height="16" viewBox="0 0 17 16"><rect x="5.5" y=".5" width="11" height="10" fill="#f4ecd8" stroke="#6a5a4a"/><path d="M7 3h4M7 5h4M7 7h4M12 3h3M12 7h3" stroke="#6a5a4a"/><rect x="0" y="5" width="4" height="2" fill="#f0b020"/><rect x="0" y="9" width="4" height="2" fill="#f0b020"/><rect x="5" y="13" width="4" height="2" fill="#f0b020"/><path d="M7 11v2" stroke="#888"/></svg>
<svg class="a" style="left:771px;top:134px;" width="16" height="15" viewBox="0 0 16 15"><rect x="4" y="0" width="12" height="3" fill="#f8b820"/><rect x="8" y="6" width="7" height="2" fill="#f8b820"/><rect x="6" y="11" width="6" height="2" fill="#f8b820"/><g class="s"><path d="M1 8a4 4 0 0 1 6-3M7 9a4 4 0 0 1-6 3" stroke="#2a9a4a" stroke-width="2" fill="none"/></g></svg>
<div class="a" style="left:791px;top:131px;width:1px;height:21px;background:#a0a0a0"></div>
<svg class="a" style="left:797px;top:133px;" width="15" height="15" viewBox="0 0 15 15"><path d="M2.5 .5h11v5" fill="#fff" stroke="#888"/><path d="M2.5 .5v12" stroke="#888"/><circle cx="2.5" cy="13" r="1.8" fill="#fff" stroke="#888"/><rect x="5.5" y="6.5" width="9" height="8" fill="#fff" stroke="#555"/><rect x="6" y="7" width="8" height="2" fill="#3a8fdc"/><path d="M7 11h2M10 11h3M7 13h2M10 13h3" stroke="#3a8fdc"/></svg>
<svg class="a" style="left:819px;top:133px;" width="16" height="15" viewBox="0 0 16 15"><rect x=".5" y="5.5" width="9" height="9" fill="#fff" stroke="#5a9a7a"/><rect x="0" y="5" width="10" height="2" fill="#5a9a7a"/><text x="2" y="13.5" font-size="6" font-family="Liberation Sans" fill="#2a7a4a" font-weight="bold">12</text><circle class="s" cx="11.5" cy="4.5" r="4" fill="#fff" stroke="#5a9a7a" stroke-width="1.2"/><path d="M11.5 2v3h2" stroke="#333" fill="none"/></svg>
<div class="a" style="left:840px;top:131px;width:1px;height:21px;background:#a0a0a0"></div>
<svg class="a" style="left:846px;top:135px;" width="16" height="11" viewBox="0 0 16 11"><rect x="10" y="0" width="5" height="10" fill="#f8d070"/><rect x=".5" y="2.5" width="14" height="7" fill="#fff" stroke="#3a78c0"/><path d="M3 4.5v3M5 4.5v3M7 6h3M8.5 4.5v3M11 6h2.5M12.25 4.5v3" stroke="#222"/></svg>
<div class="a" style="left:867px;top:131px;width:1px;height:21px;background:#a0a0a0"></div>
<div class="a" style="left:872px;top:133px;width:86px;height:20px;background:#fff;border:1px solid #b4b4b4"></div>
<div class="t" style="left:877px;top:138.99px;font-size:11px;color:#8a8a8a">Max Results</div>
<div class="t" style="left:455px;top:159.19px;font-size:11px;">Database:</div>
<div class="a" style="left:513px;top:154px;width:139px;height:20px;background:#fff;border:1px solid #a8a8a8"></div>
<div class="t" style="left:517px;top:159.19px;font-size:11px;">tomcust</div>
<svg class="a" style="left:637px;top:161px;" width="10" height="7" viewBox="0 0 10 7"><path class="s" d="M1 1l4 4 4-4" stroke="#333" stroke-width="1.6" fill="none"/></svg>
<div class="t" style="left:665px;top:159.69px;font-size:11px;letter-spacing:-0.2px">Schema:</div>
<div class="t" style="left:714px;top:159.69px;font-size:11px;letter-spacing:-0.2px">dbo</div>
<div class="t" style="left:745px;top:159.69px;font-size:11px;letter-spacing:-0.2px">Username:</div>
<div class="t" style="left:805px;top:159.69px;font-size:11px;letter-spacing:-0.2px">sa</div>
<div class="t" style="left:829px;top:159.69px;font-size:11px;letter-spacing:-0.2px">spid:</div>
<div class="t" style="left:859px;top:159.69px;font-size:11px;letter-spacing:-0.2px">61</div>
<div class="a" style="left:448px;top:178px;width:856px;height:308px;border:1px solid #a0a0a0;border-right-color:#e4e4e4;border-bottom:none;background:#fff"></div>
<div class="a" style="left:449px;top:179px;width:53px;height:307px;background:#f0f0f0"></div>
<div class="a" style="left:502px;top:179px;width:1px;height:307px;background:#c8c8c8"></div>
<div class="a" style="left:449px;top:401px;width:853px;height:17px;background:#ffffdc"></div>
<div class="a" style="left:508px;top:180px;width:794px;height:221px;background:#5a74aa"></div>
<div class="a" style="left:508px;top:401px;width:203px;height:17px;background:#5a74aa"></div>
<div class="a" style="left:1068px;top:179px;width:1px;height:307px;background:#dcdcdc"></div>
<div class="a" style="left:538px;top:333px;width:1px;height:34px;background:#c8d0e8"></div>
<div class="t" style="left:454px;top:184.37px;font-size:11px;font-family:'Liberation Mono',monospace;color:#800000">75</div>
<div class="t" style="left:454px;top:201.37px;font-size:11px;font-family:'Liberation Mono',monospace;color:#800000">76</div>
<div class="t" style="left:454px;top:218.37px;font-size:11px;font-family:'Liberation Mono',monospace;color:#800000">77</div>
<div class="t" style="left:454px;top:235.37px;font-size:11px;font-family:'Liberation Mono',monospace;color:#800000">78</div>
<div class="t" style="left:454px;top:252.37px;font-size:11px;font-family:'Liberation Mono',monospace;color:#800000">79</div>
<div class="t" style="left:454px;top:269.37px;font-size:11px;font-family:'Liberation Mono',monospace;color:#800000">80</div>
<div class="t" style="left:454px;top:286.37px;font-size:11px;font-family:'Liberation Mono',monospace;color:#800000">81</div>
<div class="t" style="left:454px;top:303.37px;font-size:11px;font-family:'Liberation Mono',monospace;color:#800000">82</div>
<div class="t" style="left:454px;top:320.37px;font-size:11px;font-family:'Liberation Mono',monospace;color:#800000">83</div>
<div class="t" style="left:454px;top:337.37px;font-size:11px;font-family:'Liberation Mono',monospace;color:#800000">84</div>
<div class="t" style="left:454px;top:354.37px;font-size:11px;font-family:'Liberation Mono',monospace;color:#800000">85</div>
<div class="t" style="left:454px;top:371.37px;font-size:11px;font-family:'Liberation Mono',monospace;color:#800000">86</div>
<div class="t" style="left:454px;top:388.37px;font-size:11px;font-family:'Liberation Mono',monospace;color:#800000">87</div>
<div class="t" style="left:454px;top:405.37px;font-size:11px;font-family:'Liberation Mono',monospace;color:#800000">88</div>
<div class="t" style="left:454px;top:422.37px;font-size:11px;font-family:'Liberation Mono',monospace;color:#800000">89</div>
<div class="t" style="left:454px;top:439.37px;font-size:11px;font-family:'Liberation Mono',monospace;color:#800000">90</div>
<div class="t" style="left:454px;top:456.37px;font-size:11px;font-family:'Liberation Mono',monospace;color:#800000">91</div>
<div class="t" style="left:454px;top:473.37px;font-size:11px;font-family:'Liberation Mono',monospace;color:#800000">92</div>
<svg class="a" style="left:498px;top:404px;" width="9" height="11" viewBox="0 0 9 11"><path d="M.5 10.5v-6l4-4 4 4v6z" fill="#fff" stroke="#c0c0c0"/><path d="M2.5 6.5h4" stroke="#aaa"/></svg>
<div class="a" style="left:502px;top:179px;width:1px;height:225px;background:#c8c8c8"></div>
<div class="t" style="left:508px;top:183.60px;font-size:12px;letter-spacing:-0.2px;white-space:pre;color:#fff;font-family:'Liberation Mono',monospace"><b>SELECT</b></div>
<div class="t" style="left:508px;top:200.60px;font-size:12px;letter-spacing:-0.2px;white-space:pre;color:#fff;font-family:'Liberation Mono',monospace">    t.<b>name</b> <b>TABLE_NAME</b>,</div>
<div class="t" style="left:508px;top:217.60px;font-size:12px;letter-spacing:-0.2px;white-space:pre;color:#fff;font-family:'Liberation Mono',monospace">    i.<b>name</b> index_name,</div>
<div class="t" style="left:508px;top:234.60px;font-size:12px;letter-spacing:-0.2px;white-space:pre;color:#fff;font-family:'Liberation Mono',monospace">    <b>INDEXPROPERTY</b>(t.<b>object_id</b>, i.<b>name</b>, 'IndexFillFactor') indexFillFactor,</div>
<div class="t" style="left:508px;top:251.60px;font-size:12px;letter-spacing:-0.2px;white-space:pre;color:#fff;font-family:'Liberation Mono',monospace">    i.has_filter,</div>
<div class="t" style="left:508px;top:268.60px;font-size:12px;letter-spacing:-0.2px;white-space:pre;color:#fff;font-family:'Liberation Mono',monospace">    i.filter_definition,</div>
<div class="t" style="left:508px;top:285.60px;font-size:12px;letter-spacing:-0.2px;white-space:pre;color:#fff;font-family:'Liberation Mono',monospace">    i.<b>type</b></div>
<div class="t" style="left:508px;top:302.60px;font-size:12px;letter-spacing:-0.2px;white-space:pre;color:#fff;font-family:'Liberation Mono',monospace"><b>FROM</b></div>
<div class="t" style="left:508px;top:319.60px;font-size:12px;letter-spacing:-0.2px;white-space:pre;color:#fff;font-family:'Liberation Mono',monospace">    sys.objects t</div>
<div class="t" style="left:508px;top:336.60px;font-size:12px;letter-spacing:-0.2px;white-space:pre;color:#fff;font-family:'Liberation Mono',monospace">        <b>LEFT JOIN</b> sys.indexes i</div>
<div class="t" style="left:508px;top:353.60px;font-size:12px;letter-spacing:-0.2px;white-space:pre;color:#fff;font-family:'Liberation Mono',monospace">        <b>ON</b> t.<b>object_id</b> = i.<b>object_id</b></div>
<div class="t" style="left:508px;top:370.60px;font-size:12px;letter-spacing:-0.2px;white-space:pre;color:#fff;font-family:'Liberation Mono',monospace"><b>WHERE</b></div>
<div class="t" style="left:508px;top:387.60px;font-size:12px;letter-spacing:-0.2px;white-space:pre;color:#fff;font-family:'Liberation Mono',monospace">    <b>SCHEMA_NAME</b>(t.schema_id) = N'dbo' <b>AND</b></div>
<div class="t" style="left:508px;top:404.60px;font-size:12px;letter-spacing:-0.2px;white-space:pre;color:#fff;font-family:'Liberation Mono',monospace">    t.<b>name</b> = N'AanslagSoort'</div>
<div class="a" style="left:1294px;top:410px;width:8px;height:56px;background:#d4d4d4;border-radius:3px 0 0 3px;opacity:.95"></div>
<div class="a" style="left:448px;top:485px;width:855px;height:22px;border:1px solid #a0a0a0;border-top:1px solid #c8c8c8;background:#f0f0f0"></div>
<div class="t" style="left:458px;top:491.29px;font-size:11px;">[11/3/2021 9:32:07 AM] Script executed - No Errors [Time: 346ms]</div>
<div class="t" style="left:1061px;top:490.89px;font-size:11px;letter-spacing:-0.3px">319 chars, 14 lines</div>
<div class="t" style="left:1166px;top:490.89px;font-size:11px;">88:30</div>
<div class="t" style="left:1214px;top:490.89px;font-size:11px;letter-spacing:-0.4px">CRLF</div>
<div class="t" style="left:1259px;top:490.89px;font-size:11px;letter-spacing:-0.1px">UTF-8</div>
<svg class="a" style="left:1241px;top:491px;" width="5" height="9" viewBox="0 0 5 9"><path class="s" d="M0 3.5L2.5 0 5 3.5zM0 5.5L2.5 9 5 5.5z" fill="#555"/></svg>
<svg class="a" style="left:1290px;top:491px;" width="5" height="9" viewBox="0 0 5 9"><path class="s" d="M0 3.5L2.5 0 5 3.5zM0 5.5L2.5 9 5 5.5z" fill="#555"/></svg>
<div class="a" style="left:868px;top:510px;width:16px;height:2px;background:repeating-linear-gradient(90deg,#9a9a9a 0 1px,transparent 1px 2px)"></div>
<div class="a" style="left:447px;top:514px;width:857px;height:307px;border:1px solid #a0a0a0"></div>
<div class="a" style="left:449px;top:536px;width:853px;height:283px;border:1px solid #a0a0a0"></div>
<div class="a" style="left:457px;top:518px;width:190px;height:19px;background:#e3e3e3;border:1px solid #a0a0a0;border-bottom:none"></div>
<div class="t" style="left:463px;top:522.39px;font-size:11px;font-weight:bold;letter-spacing:-0.1px">SELECT&nbsp;&nbsp;&nbsp;&nbsp;t.name TABLE_NA...</div>
<svg class="a" style="left:631px;top:523px;" width="13" height="9" viewBox="0 0 13 9"><path d="M0 4.5h5" stroke="#777" stroke-width="1.2"/><rect x="6" y="1" width="2" height="7" fill="#777"/><rect x="8.5" y="2.5" width="4" height="4" fill="#fff" stroke="#777"/></svg>
<svg class="a" style="left:454px;top:542px;" width="16" height="15" viewBox="0 0 16 15"><g class="s"><path d="M0 8l6-5 4 3 6-5" stroke="#e06a8a" stroke-width="1.3" fill="none"/></g><rect x="1" y="9" width="2" height="6" fill="#f0a030"/><rect x="5" y="7" width="2" height="8" fill="#40b0e0"/><rect x="9" y="10" width="2" height="5" fill="#70c050"/><rect x="13" y="5" width="2" height="10" fill="#f0a030"/></svg>
<svg class="a" style="left:480px;top:548px;" width="5" height="3" viewBox="0 0 5 3"><path class="s" d="M0 0H5L2.5 3z" fill="#000"/></svg>
<div class="a" style="left:491px;top:540px;width:1px;height:19px;background:#a0a0a0"></div>
<svg class="a" style="left:497px;top:542px;" width="16" height="14" viewBox="0 0 16 14"><rect x="0" y="0" width="6" height="4" fill="#3a7fc8"/><rect x="0" y="5" width="12" height="4" fill="#f0c070"/><rect x="0" y="10" width="10" height="4" fill="#555"/><path class="s" d="M10 5l5-4v8z" fill="#555"/></svg>
<svg class="a" style="left:519px;top:542px;" width="15" height="15" viewBox="0 0 15 15"><rect x=".5" y=".5" width="11" height="11" fill="#fff" stroke="#3a7fc8"/><rect x="0" y="0" width="12" height="2" fill="#3a7fc8"/><path d="M2 5h7M2 7h4" stroke="#888"/><rect x="5.5" y="5.5" width="9" height="9" fill="#e8f4e8" stroke="#2a8a4a"/><path class="s" d="M8 8l4 4M12 8l-4 4" stroke="#2a8a4a" stroke-width="1.5"/></svg>
<svg class="a" style="left:545px;top:548px;" width="5" height="3" viewBox="0 0 5 3"><path class="s" d="M0 0H5L2.5 3z" fill="#000"/></svg>
<div class="a" style="left:555px;top:540px;width:1px;height:19px;background:#a0a0a0"></div>
<svg class="a" style="left:563px;top:541px;" width="15" height="16" viewBox="0 0 15 16"><path d="M3.5 .5h10v13h-10z" fill="#fff" stroke="#999"/><path d="M.5 11.5h5v4h-5z" fill="#eee" stroke="#999"/><rect x="5" y="4" width="7" height="6" fill="#f8d040"/><path d="M5 5.5h7M5 7.5h7" stroke="#a08040" stroke-width=".6"/></svg>
<div class="a" style="left:583px;top:540px;width:1px;height:19px;background:#a0a0a0"></div>
<div class="t" style="left:589.5px;top:544.39px;font-size:11px;letter-spacing:-0.1px">1 record(s) [Exec: 124ms / Fetch: 0ms]</div>
<div class="a" style="left:783px;top:538px;width:34px;height:22px;border:1px solid #8c8c8c"></div>
<div class="t" style="left:787px;top:544.39px;font-size:11px;">Sum:</div>
<div class="a" style="left:1078px;top:538px;width:192px;height:22px;background:#fff;border:1px solid #a8a8a8"></div>
<svg class="a" style="left:1081px;top:544px;" width="18" height="12" viewBox="0 0 18 12"><g class="s"><circle cx="5" cy="5" r="3.6" fill="none" stroke="#999" stroke-width="1.8"/><path d="M7.5 7.5l3.5 3.5" stroke="#999" stroke-width="2"/></g><path class="s" d="M12 5h5l-2.5 2.5z" fill="#999"/></svg>
<svg class="a" style="left:1277px;top:542px;" width="16" height="16" viewBox="0 0 16 16"><g class="s"><path d="M4 1.5l3 1.7v3.6L4 8.5 1 6.8V3.2z" fill="#d08a30"/><circle cx="4" cy="5" r="1.2" fill="#f0f0f0"/><path d="M3 15l9-9" stroke="#777" stroke-width="2.6"/><circle cx="12" cy="5" r="3" fill="#777"/><circle cx="13" cy="4" r="1.3" fill="#f0f0f0"/><circle cx="3" cy="14" r="2.2" fill="#777"/><circle cx="2.5" cy="14.5" r="1" fill="#f0f0f0"/></g></svg>
<div class="a" style="left:451px;top:562px;width:844px;height:255px;border:1px solid #7c8694;background:#fff"></div>
<div class="a" style="left:452px;top:563px;width:842px;height:22px;background:#f0f0f0"></div>
<div class="a" style="left:452px;top:584px;width:582px;height:1px;background:#e0e0e0"></div>
<div class="a" style="left:452px;top:602px;width:582px;height:1px;background:#e0e0e0"></div>
<div class="a" style="left:501px;top:563px;width:1px;height:39px;background:#dcdcdc"></div>
<div class="a" style="left:601px;top:563px;width:1px;height:39px;background:#dcdcdc"></div>
<div class="a" style="left:711px;top:563px;width:1px;height:39px;background:#dcdcdc"></div>
<div class="a" style="left:813px;top:563px;width:1px;height:39px;background:#dcdcdc"></div>
<div class="a" style="left:887px;top:563px;width:1px;height:39px;background:#dcdcdc"></div>
<div class="a" style="left:989px;top:563px;width:1px;height:39px;background:#dcdcdc"></div>
<div class="a" style="left:1034px;top:563px;width:1px;height:39px;background:#dcdcdc"></div>
<div class="a" style="left:452px;top:585px;width:49px;height:17px;background:#f0f0f0"></div>
<div class="t" style="left:492px;top:567.64px;width:120px;text-align:center;font-size:12px">TABLE_NAME</div>
<div class="t" style="left:596px;top:567.64px;width:120px;text-align:center;font-size:12px">index_name</div>
<div class="t" style="left:702px;top:567.64px;width:120px;text-align:center;font-size:12px">indexFillFactor</div>
<div class="t" style="left:790px;top:567.64px;width:120px;text-align:center;font-size:12px">has_filter</div>
<div class="t" style="left:878px;top:567.64px;width:120px;text-align:center;font-size:12px">filter_definition</div>
<div class="t" style="left:952px;top:567.64px;width:120px;text-align:center;font-size:12px">type</div>
<div class="t" style="left:473.5px;top:587.54px;font-size:12px;">1</div>
<div class="t" style="left:503px;top:587.54px;font-size:12px;">AanslagSoort</div>
<div class="t" style="left:603px;top:587.54px;font-size:12px;">PK_AanslagSoort</div>
<div class="t" style="left:700px;top:587.54px;width:110px;text-align:right;font-size:12px">100</div>
<div class="t" style="left:780px;top:587.54px;width:105px;text-align:right;font-size:12px">0</div>
<div class="t" style="left:889px;top:587.54px;font-size:12px;font-style:italic">(null)</div>
<div class="t" style="left:980px;top:587.54px;width:52px;text-align:right;font-size:12px">1</div>
<div class="a" style="left:452px;top:820px;width:58px;height:21px;background:#e1e1e1;border:1px solid #a0a0a0;border-top:none"></div>
<svg class="a" style="left:456px;top:824px;" width="14" height="15" viewBox="0 0 14 15"><rect x=".5" y=".5" width="13" height="14" fill="#fff" stroke="#777"/><rect x="0" y="0" width="14" height="3" fill="#4a7fc0"/><path d="M1 6.5h12M1 9.5h12M1 12.5h12M4.5 3v10M9.5 3v10" stroke="#777"/></svg>
<div class="t" style="left:476px;top:825.99px;font-size:11px;">Grid</div>
<svg class="a" style="left:515px;top:824px;" width="14" height="15" viewBox="0 0 14 15"><rect x=".5" y=".5" width="13" height="14" fill="#fff" stroke="#777"/><rect x="0" y="0" width="14" height="3" fill="#4a7fc0"/><path d="M2 6h10M2 8h10M2 10h10M2 12h10" stroke="#888" stroke-dasharray="1.5 1"/></svg>
<div class="t" style="left:534px;top:825.99px;font-size:11px;">Messages</div>
<div class="a" style="left:595px;top:823px;width:1px;height:18px;background:#a0a0a0"></div>
<div class="a" style="left:1297px;top:670px;width:2px;height:16px;background:repeating-linear-gradient(#9a9a9a 0 1px,transparent 1px 2px)"></div>
<div class="a" style="left:29px;top:848px;width:1281px;height:22px;border-top:1px solid #7f8a98;border-bottom:1px solid #7f8a98;background:linear-gradient(#dde5f0,#c9d3e1)"></div>
<div class="t" style="left:33px;top:854.29px;font-size:11px;letter-spacing:-0.06px">Detail : Local Database Servers / IAWS / SQL Server 172.24.1.199 2016 / Databases / tomcust / dbo / Tables / dbo.AanslagSoort / Constraints / PK_AanslagSoort</div>
<svg class="a" style="left:1262px;top:853px;" width="20" height="13" viewBox="0 0 20 13"><g class="s"><circle cx="6" cy="6" r="3.6" fill="none" stroke="#6e6e6e" stroke-width="2.6"/><path d="M6 0v12M0 6h12M1.8 1.8l8.4 8.4M10.2 1.8l-8.4 8.4" stroke="#6e6e6e" stroke-width="1.8"/><circle cx="6" cy="6" r="1.2" fill="#d4dce8"/></g><path class="s" d="M14 5h5l-2.5 3z" fill="#777"/></svg>
<svg class="a" style="left:1291px;top:853px;" width="12" height="13" viewBox="0 0 12 13"><path d="M5.5 0v8" stroke="#6e6e6e"/><path class="s" d="M2.5 5l3 3.5 3-3.5z" fill="#6e6e6e"/><rect x="0" y="9.5" width="11" height="3" fill="#6e6e6e"/><rect x="5" y="10.5" width="5" height="1" fill="#d4dce8"/></svg>
<div class="a" style="left:8px;top:985px;width:1301px;height:1px;background:#a0a0a0"></div>
<div class="a" style="left:28px;top:986px;width:84px;height:20px;background:#bfbfbf"></div>
<svg class="a" style="left:39px;top:992px;" width="14" height="10" viewBox="0 0 14 10"><rect x="0" y="0" width="14" height="2" fill="#4aa3df"/><path d="M1 4h3M5 4h4M10 4h3M1 6.5h3M5 6.5h4M10 6.5h3M1 9h3M5 9h4M10 9h3" stroke="#fff" stroke-width="1.4"/></svg>
<div class="t" style="left:55px;top:991.09px;font-size:11px;">F5: Detail</div>
<div class="a" style="left:8px;top:1006px;width:1301px;height:1px;background:#a0a0a0"></div>
<div class="t" style="left:21px;top:1011.69px;font-size:11px;letter-spacing:-0.05px">Local Database Servers / IAWS / SQL Server 172.24.1.199 2016 / Databases / tomcust / dbo / Tables / dbo.AanslagSoort / Constraints / PK_AanslagSoort</div>
<div class="a" style="left:1109px;top:1007px;width:200px;height:20px;border:1px solid #a0a0a0;background:#f0f0f0"></div>
<div class="a" style="left:1110px;top:1009px;width:6px;height:16px;background:#b0b0b0"></div>
<div class="a" style="left:1116px;top:1009px;width:18px;height:16px;background:#d8d8d8"></div>
<div class="t" style="left:1161px;top:1011.09px;font-size:11px;">157 : 512 : 4,053 MB</div>
<svg class="a" style="left:1293px;top:1009px;" width="14" height="16" viewBox="0 0 14 16"><path d="M4 2.5h6" stroke="#3a8fcf" stroke-width="1.5"/><rect x="0" y="4" width="14" height="2" fill="#3a8fcf"/><path d="M1.5 6.5h11l-1 9h-9z" fill="#3a8fcf"/><path d="M4.5 8v6M7 8v6M9.5 8v6" stroke="#cfe6f5"/></svg></body></html>
